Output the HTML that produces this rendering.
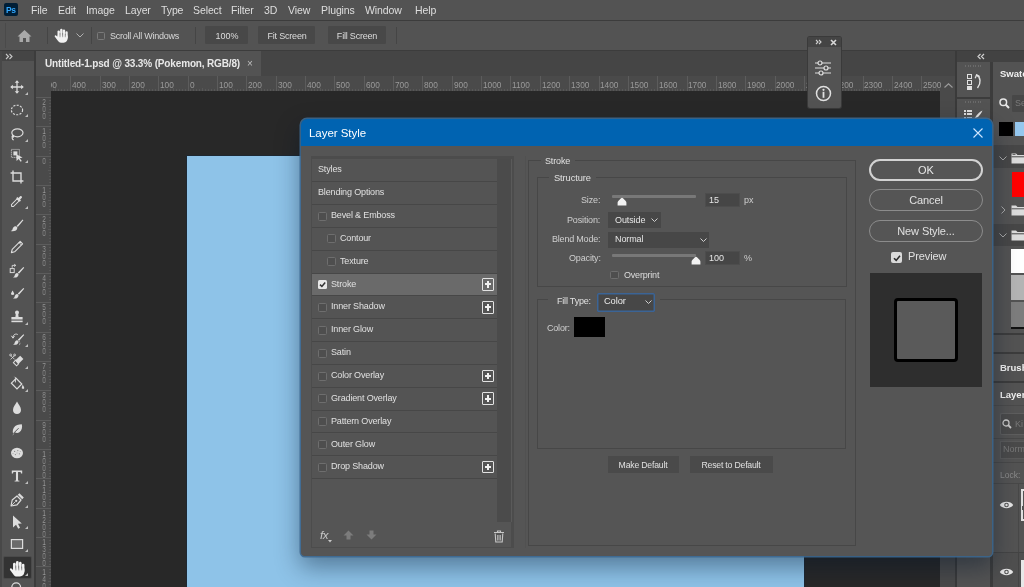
<!DOCTYPE html>
<html><head><meta charset="utf-8"><style>
html,body{margin:0;padding:0;width:1024px;height:587px;overflow:hidden;background:#535353;}
body{position:relative;font-family:"Liberation Sans", sans-serif;}
body>div{position:absolute;}
.t{white-space:nowrap;will-change:transform;}
</style></head><body>
<div style="left:0px;top:0px;width:1024px;height:587px;background:#535353;"></div>
<div style="left:0px;top:0px;width:1024px;height:20px;background:#535353;"></div>
<div style="left:0px;top:20px;width:1024px;height:1px;background:#3c3c3c;"></div>
<div style="left:4px;top:3px;width:14px;height:13px;background:#001e36;border-radius:2px;"></div>
<div class="t" style="left:5.5px;top:6.30px;font-size:8.5px;line-height:8.5px;color:#31a8ff;font-weight:bold;letter-spacing:-0.3px;">Ps</div>
<div class="t" style="left:31px;top:4.71px;font-size:10.5px;line-height:10.5px;color:#dedede;font-weight:normal;letter-spacing:-0.1px;">File</div>
<div class="t" style="left:57.6px;top:4.71px;font-size:10.5px;line-height:10.5px;color:#dedede;font-weight:normal;letter-spacing:-0.1px;">Edit</div>
<div class="t" style="left:85.6px;top:4.71px;font-size:10.5px;line-height:10.5px;color:#dedede;font-weight:normal;letter-spacing:-0.1px;">Image</div>
<div class="t" style="left:125.4px;top:4.71px;font-size:10.5px;line-height:10.5px;color:#dedede;font-weight:normal;letter-spacing:-0.1px;">Layer</div>
<div class="t" style="left:160.9px;top:4.71px;font-size:10.5px;line-height:10.5px;color:#dedede;font-weight:normal;letter-spacing:-0.1px;">Type</div>
<div class="t" style="left:193px;top:4.71px;font-size:10.5px;line-height:10.5px;color:#dedede;font-weight:normal;letter-spacing:-0.1px;">Select</div>
<div class="t" style="left:230.8px;top:4.71px;font-size:10.5px;line-height:10.5px;color:#dedede;font-weight:normal;letter-spacing:-0.1px;">Filter</div>
<div class="t" style="left:264px;top:4.71px;font-size:10.5px;line-height:10.5px;color:#dedede;font-weight:normal;letter-spacing:-0.1px;">3D</div>
<div class="t" style="left:287.7px;top:4.71px;font-size:10.5px;line-height:10.5px;color:#dedede;font-weight:normal;letter-spacing:-0.1px;">View</div>
<div class="t" style="left:321px;top:4.71px;font-size:10.5px;line-height:10.5px;color:#dedede;font-weight:normal;letter-spacing:-0.1px;">Plugins</div>
<div class="t" style="left:364.5px;top:4.71px;font-size:10.5px;line-height:10.5px;color:#dedede;font-weight:normal;letter-spacing:-0.1px;">Window</div>
<div class="t" style="left:414.6px;top:4.71px;font-size:10.5px;line-height:10.5px;color:#dedede;font-weight:normal;letter-spacing:-0.1px;">Help</div>
<div style="left:0px;top:21px;width:1024px;height:29px;background:#535353;"></div>
<div style="left:0px;top:50px;width:1024px;height:1px;background:#3c3c3c;"></div>
<div style="left:4.5px;top:23px;width:1px;height:25px;background:#4a4a4a;"></div>
<div style="left:46.5px;top:27px;width:1px;height:17px;background:#454545;"></div>
<svg style="position:absolute;left:17px;top:28.5px;" width="15" height="14" viewBox="0 0 15 14"><path d="M7.5 1 L14.5 7.5 L12.5 7.5 L12.5 13 L9 13 L9 9 L6 9 L6 13 L2.5 13 L2.5 7.5 L0.5 7.5 Z" fill="#a9a9a9"/></svg>
<svg style="position:absolute;left:53px;top:26.5px" width="17" height="17" viewBox="0 0 20 20"><g fill="#f2f2f2"><rect x="5.3" y="4" width="2.8" height="10" rx="1.4"/><rect x="8.4" y="2.2" width="2.8" height="11" rx="1.4"/><rect x="11.5" y="3" width="2.8" height="11" rx="1.4"/><rect x="14.6" y="5" width="2.7" height="9" rx="1.35"/><path d="M5.3 10 H17.3 V13 C17.3 16 15.5 18.5 12.5 18.5 H9.5 C7.5 18.5 6.5 17.5 5.5 16 L2.2 11.5 C1.5 10.5 2.6 9.3 3.6 10 L5.3 11.5 Z"/></g><g stroke="#535353" stroke-width=".6"><path d="M8.25 7 V12 M11.35 7 V12 M14.45 8 V12"/></g></svg>
<svg style="position:absolute;left:76px;top:33px;" width="8" height="5" viewBox="0 0 8 5"><path d="M0.5 0.5 L4 4 L7.5 0.5" stroke="#b0b0b0" stroke-width="1" fill="none"/></svg>
<div style="left:90.5px;top:27px;width:1px;height:17px;background:#454545;"></div>
<div style="left:97px;top:32px;width:8px;height:8px;border:1px solid #7a7a7a;border-radius:1.5px;box-sizing:border-box;"></div>
<div class="t" style="left:110px;top:31.58px;font-size:9px;line-height:9px;color:#d8d8d8;font-weight:normal;letter-spacing:-0.25px;">Scroll All Windows</div>
<div style="left:194.5px;top:27px;width:1px;height:17px;background:#454545;"></div>
<div style="left:205px;top:26px;width:43px;height:18px;background:#484848;border-radius:1px;"></div>
<div class="t" style="left:-73.5px;width:600px;text-align:center;top:31.58px;font-size:9px;line-height:9px;color:#dcdcdc;font-weight:normal;letter-spacing:0px;">100%</div>
<div style="left:258px;top:26px;width:57px;height:18px;background:#484848;border-radius:1px;"></div>
<div class="t" style="left:-13.5px;width:600px;text-align:center;top:31.58px;font-size:9px;line-height:9px;color:#dcdcdc;font-weight:normal;letter-spacing:-0.2px;">Fit Screen</div>
<div style="left:328px;top:26px;width:58px;height:18px;background:#484848;border-radius:1px;"></div>
<div class="t" style="left:57px;width:600px;text-align:center;top:31.58px;font-size:9px;line-height:9px;color:#dcdcdc;font-weight:normal;letter-spacing:-0.2px;">Fill Screen</div>
<div style="left:396px;top:27px;width:1px;height:17px;background:#454545;"></div>
<div style="left:36px;top:51px;width:920px;height:25px;background:#454545;"></div>
<div style="left:36px;top:51px;width:225px;height:25px;background:#535353;"></div>
<div class="t" style="left:45px;top:59.03px;font-size:10px;line-height:10px;color:#e8e8e8;font-weight:bold;letter-spacing:-0.15px;">Untitled-1.psd @ 33.3% (Pokemon, RGB/8)</div>
<div class="t" style="left:246.5px;top:59.03px;font-size:10px;line-height:10px;color:#bdbdbd;font-weight:normal;letter-spacing:0px;">&#215;</div>
<div style="left:36px;top:76px;width:904px;height:15px;background:#4a4a4a;"></div>
<div style="left:36px;top:91px;width:15px;height:496px;background:#4a4a4a;"></div>
<div style="left:51px;top:91px;width:889px;height:496px;background:#282828;"></div>
<div style="left:187px;top:156px;width:617px;height:431px;background:#8ec3e8;box-shadow:0 0 0 1px rgba(20,40,60,.5);"></div>
<div style="left:940px;top:76px;width:16px;height:511px;background:#4a4a4a;"></div>
<div style="left:955px;top:51px;width:2px;height:536px;background:#3a3a3a;"></div>
<div style="left:53px;top:89px;width:1px;height:2px;background:#575757;"></div>
<div style="left:55px;top:88px;width:1px;height:3px;background:#575757;"></div>
<div style="left:58px;top:89px;width:1px;height:2px;background:#575757;"></div>
<div style="left:61px;top:89px;width:1px;height:2px;background:#575757;"></div>
<div style="left:64px;top:89px;width:1px;height:2px;background:#575757;"></div>
<div style="left:67px;top:89px;width:1px;height:2px;background:#575757;"></div>
<div class="t" style="left:42.8px;top:81.0px;font-size:8.3px;line-height:8.3px;color:#9a9a9a;clip-path:inset(0 0 0 8.2px)">500</div>
<div style="left:70.0px;top:76px;width:1px;height:15px;background:#5c5c5c;"></div>
<div style="left:73px;top:89px;width:1px;height:2px;background:#575757;"></div>
<div style="left:76px;top:89px;width:1px;height:2px;background:#575757;"></div>
<div style="left:79px;top:89px;width:1px;height:2px;background:#575757;"></div>
<div style="left:82px;top:89px;width:1px;height:2px;background:#575757;"></div>
<div style="left:85px;top:88px;width:1px;height:3px;background:#575757;"></div>
<div style="left:88px;top:89px;width:1px;height:2px;background:#575757;"></div>
<div style="left:91px;top:89px;width:1px;height:2px;background:#575757;"></div>
<div style="left:94px;top:89px;width:1px;height:2px;background:#575757;"></div>
<div style="left:97px;top:89px;width:1px;height:2px;background:#575757;"></div>
<div class="t" style="left:72.1px;top:81.0px;font-size:8.3px;line-height:8.3px;color:#9a9a9a;clip-path:inset(0 0 0 0.0px)">400</div>
<div style="left:99.5px;top:76px;width:1px;height:15px;background:#5c5c5c;"></div>
<div style="left:102px;top:89px;width:1px;height:2px;background:#575757;"></div>
<div style="left:105px;top:89px;width:1px;height:2px;background:#575757;"></div>
<div style="left:108px;top:89px;width:1px;height:2px;background:#575757;"></div>
<div style="left:111px;top:89px;width:1px;height:2px;background:#575757;"></div>
<div style="left:114px;top:88px;width:1px;height:3px;background:#575757;"></div>
<div style="left:117px;top:89px;width:1px;height:2px;background:#575757;"></div>
<div style="left:120px;top:89px;width:1px;height:2px;background:#575757;"></div>
<div style="left:123px;top:89px;width:1px;height:2px;background:#575757;"></div>
<div style="left:126px;top:89px;width:1px;height:2px;background:#575757;"></div>
<div class="t" style="left:101.5px;top:81.0px;font-size:8.3px;line-height:8.3px;color:#9a9a9a;clip-path:inset(0 0 0 0.0px)">300</div>
<div style="left:129.0px;top:76px;width:1px;height:15px;background:#5c5c5c;"></div>
<div style="left:132px;top:89px;width:1px;height:2px;background:#575757;"></div>
<div style="left:135px;top:89px;width:1px;height:2px;background:#575757;"></div>
<div style="left:138px;top:89px;width:1px;height:2px;background:#575757;"></div>
<div style="left:141px;top:89px;width:1px;height:2px;background:#575757;"></div>
<div style="left:143px;top:88px;width:1px;height:3px;background:#575757;"></div>
<div style="left:146px;top:89px;width:1px;height:2px;background:#575757;"></div>
<div style="left:149px;top:89px;width:1px;height:2px;background:#575757;"></div>
<div style="left:152px;top:89px;width:1px;height:2px;background:#575757;"></div>
<div style="left:155px;top:89px;width:1px;height:2px;background:#575757;"></div>
<div class="t" style="left:130.8px;top:81.0px;font-size:8.3px;line-height:8.3px;color:#9a9a9a;clip-path:inset(0 0 0 0.0px)">200</div>
<div style="left:158.0px;top:76px;width:1px;height:15px;background:#5c5c5c;"></div>
<div style="left:161px;top:89px;width:1px;height:2px;background:#575757;"></div>
<div style="left:164px;top:89px;width:1px;height:2px;background:#575757;"></div>
<div style="left:167px;top:89px;width:1px;height:2px;background:#575757;"></div>
<div style="left:170px;top:89px;width:1px;height:2px;background:#575757;"></div>
<div style="left:173px;top:88px;width:1px;height:3px;background:#575757;"></div>
<div style="left:176px;top:89px;width:1px;height:2px;background:#575757;"></div>
<div style="left:179px;top:89px;width:1px;height:2px;background:#575757;"></div>
<div style="left:182px;top:89px;width:1px;height:2px;background:#575757;"></div>
<div style="left:185px;top:89px;width:1px;height:2px;background:#575757;"></div>
<div class="t" style="left:160.2px;top:81.0px;font-size:8.3px;line-height:8.3px;color:#9a9a9a;clip-path:inset(0 0 0 0.0px)">100</div>
<div style="left:187.5px;top:76px;width:1px;height:15px;background:#5c5c5c;"></div>
<div style="left:190px;top:89px;width:1px;height:2px;background:#575757;"></div>
<div style="left:193px;top:89px;width:1px;height:2px;background:#575757;"></div>
<div style="left:196px;top:89px;width:1px;height:2px;background:#575757;"></div>
<div style="left:199px;top:89px;width:1px;height:2px;background:#575757;"></div>
<div style="left:202px;top:88px;width:1px;height:3px;background:#575757;"></div>
<div style="left:205px;top:89px;width:1px;height:2px;background:#575757;"></div>
<div style="left:208px;top:89px;width:1px;height:2px;background:#575757;"></div>
<div style="left:211px;top:89px;width:1px;height:2px;background:#575757;"></div>
<div style="left:214px;top:89px;width:1px;height:2px;background:#575757;"></div>
<div class="t" style="left:189.5px;top:81.0px;font-size:8.3px;line-height:8.3px;color:#9a9a9a;clip-path:inset(0 0 0 0.0px)">0</div>
<div style="left:217.0px;top:76px;width:1px;height:15px;background:#5c5c5c;"></div>
<div style="left:220px;top:89px;width:1px;height:2px;background:#575757;"></div>
<div style="left:223px;top:89px;width:1px;height:2px;background:#575757;"></div>
<div style="left:226px;top:89px;width:1px;height:2px;background:#575757;"></div>
<div style="left:229px;top:89px;width:1px;height:2px;background:#575757;"></div>
<div style="left:232px;top:88px;width:1px;height:3px;background:#575757;"></div>
<div style="left:234px;top:89px;width:1px;height:2px;background:#575757;"></div>
<div style="left:237px;top:89px;width:1px;height:2px;background:#575757;"></div>
<div style="left:240px;top:89px;width:1px;height:2px;background:#575757;"></div>
<div style="left:243px;top:89px;width:1px;height:2px;background:#575757;"></div>
<div class="t" style="left:218.8px;top:81.0px;font-size:8.3px;line-height:8.3px;color:#9a9a9a;clip-path:inset(0 0 0 0.0px)">100</div>
<div style="left:246.0px;top:76px;width:1px;height:15px;background:#5c5c5c;"></div>
<div style="left:249px;top:89px;width:1px;height:2px;background:#575757;"></div>
<div style="left:252px;top:89px;width:1px;height:2px;background:#575757;"></div>
<div style="left:255px;top:89px;width:1px;height:2px;background:#575757;"></div>
<div style="left:258px;top:89px;width:1px;height:2px;background:#575757;"></div>
<div style="left:261px;top:88px;width:1px;height:3px;background:#575757;"></div>
<div style="left:264px;top:89px;width:1px;height:2px;background:#575757;"></div>
<div style="left:267px;top:89px;width:1px;height:2px;background:#575757;"></div>
<div style="left:270px;top:89px;width:1px;height:2px;background:#575757;"></div>
<div style="left:273px;top:89px;width:1px;height:2px;background:#575757;"></div>
<div class="t" style="left:248.2px;top:81.0px;font-size:8.3px;line-height:8.3px;color:#9a9a9a;clip-path:inset(0 0 0 0.0px)">200</div>
<div style="left:275.5px;top:76px;width:1px;height:15px;background:#5c5c5c;"></div>
<div style="left:278px;top:89px;width:1px;height:2px;background:#575757;"></div>
<div style="left:281px;top:89px;width:1px;height:2px;background:#575757;"></div>
<div style="left:284px;top:89px;width:1px;height:2px;background:#575757;"></div>
<div style="left:287px;top:89px;width:1px;height:2px;background:#575757;"></div>
<div style="left:290px;top:88px;width:1px;height:3px;background:#575757;"></div>
<div style="left:293px;top:89px;width:1px;height:2px;background:#575757;"></div>
<div style="left:296px;top:89px;width:1px;height:2px;background:#575757;"></div>
<div style="left:299px;top:89px;width:1px;height:2px;background:#575757;"></div>
<div style="left:302px;top:89px;width:1px;height:2px;background:#575757;"></div>
<div class="t" style="left:277.5px;top:81.0px;font-size:8.3px;line-height:8.3px;color:#9a9a9a;clip-path:inset(0 0 0 0.0px)">300</div>
<div style="left:305.0px;top:76px;width:1px;height:15px;background:#5c5c5c;"></div>
<div style="left:308px;top:89px;width:1px;height:2px;background:#575757;"></div>
<div style="left:311px;top:89px;width:1px;height:2px;background:#575757;"></div>
<div style="left:314px;top:89px;width:1px;height:2px;background:#575757;"></div>
<div style="left:317px;top:89px;width:1px;height:2px;background:#575757;"></div>
<div style="left:320px;top:88px;width:1px;height:3px;background:#575757;"></div>
<div style="left:322px;top:89px;width:1px;height:2px;background:#575757;"></div>
<div style="left:325px;top:89px;width:1px;height:2px;background:#575757;"></div>
<div style="left:328px;top:89px;width:1px;height:2px;background:#575757;"></div>
<div style="left:331px;top:89px;width:1px;height:2px;background:#575757;"></div>
<div class="t" style="left:306.9px;top:81.0px;font-size:8.3px;line-height:8.3px;color:#9a9a9a;clip-path:inset(0 0 0 0.0px)">400</div>
<div style="left:334.0px;top:76px;width:1px;height:15px;background:#5c5c5c;"></div>
<div style="left:337px;top:89px;width:1px;height:2px;background:#575757;"></div>
<div style="left:340px;top:89px;width:1px;height:2px;background:#575757;"></div>
<div style="left:343px;top:89px;width:1px;height:2px;background:#575757;"></div>
<div style="left:346px;top:89px;width:1px;height:2px;background:#575757;"></div>
<div style="left:349px;top:88px;width:1px;height:3px;background:#575757;"></div>
<div style="left:352px;top:89px;width:1px;height:2px;background:#575757;"></div>
<div style="left:355px;top:89px;width:1px;height:2px;background:#575757;"></div>
<div style="left:358px;top:89px;width:1px;height:2px;background:#575757;"></div>
<div style="left:361px;top:89px;width:1px;height:2px;background:#575757;"></div>
<div class="t" style="left:336.2px;top:81.0px;font-size:8.3px;line-height:8.3px;color:#9a9a9a;clip-path:inset(0 0 0 0.0px)">500</div>
<div style="left:363.5px;top:76px;width:1px;height:15px;background:#5c5c5c;"></div>
<div style="left:366px;top:89px;width:1px;height:2px;background:#575757;"></div>
<div style="left:369px;top:89px;width:1px;height:2px;background:#575757;"></div>
<div style="left:372px;top:89px;width:1px;height:2px;background:#575757;"></div>
<div style="left:375px;top:89px;width:1px;height:2px;background:#575757;"></div>
<div style="left:378px;top:88px;width:1px;height:3px;background:#575757;"></div>
<div style="left:381px;top:89px;width:1px;height:2px;background:#575757;"></div>
<div style="left:384px;top:89px;width:1px;height:2px;background:#575757;"></div>
<div style="left:387px;top:89px;width:1px;height:2px;background:#575757;"></div>
<div style="left:390px;top:89px;width:1px;height:2px;background:#575757;"></div>
<div class="t" style="left:365.5px;top:81.0px;font-size:8.3px;line-height:8.3px;color:#9a9a9a;clip-path:inset(0 0 0 0.0px)">600</div>
<div style="left:393.0px;top:76px;width:1px;height:15px;background:#5c5c5c;"></div>
<div style="left:396px;top:89px;width:1px;height:2px;background:#575757;"></div>
<div style="left:399px;top:89px;width:1px;height:2px;background:#575757;"></div>
<div style="left:402px;top:89px;width:1px;height:2px;background:#575757;"></div>
<div style="left:405px;top:89px;width:1px;height:2px;background:#575757;"></div>
<div style="left:408px;top:88px;width:1px;height:3px;background:#575757;"></div>
<div style="left:410px;top:89px;width:1px;height:2px;background:#575757;"></div>
<div style="left:413px;top:89px;width:1px;height:2px;background:#575757;"></div>
<div style="left:416px;top:89px;width:1px;height:2px;background:#575757;"></div>
<div style="left:419px;top:89px;width:1px;height:2px;background:#575757;"></div>
<div class="t" style="left:394.9px;top:81.0px;font-size:8.3px;line-height:8.3px;color:#9a9a9a;clip-path:inset(0 0 0 0.0px)">700</div>
<div style="left:422.0px;top:76px;width:1px;height:15px;background:#5c5c5c;"></div>
<div style="left:425px;top:89px;width:1px;height:2px;background:#575757;"></div>
<div style="left:428px;top:89px;width:1px;height:2px;background:#575757;"></div>
<div style="left:431px;top:89px;width:1px;height:2px;background:#575757;"></div>
<div style="left:434px;top:89px;width:1px;height:2px;background:#575757;"></div>
<div style="left:437px;top:88px;width:1px;height:3px;background:#575757;"></div>
<div style="left:440px;top:89px;width:1px;height:2px;background:#575757;"></div>
<div style="left:443px;top:89px;width:1px;height:2px;background:#575757;"></div>
<div style="left:446px;top:89px;width:1px;height:2px;background:#575757;"></div>
<div style="left:449px;top:89px;width:1px;height:2px;background:#575757;"></div>
<div class="t" style="left:424.2px;top:81.0px;font-size:8.3px;line-height:8.3px;color:#9a9a9a;clip-path:inset(0 0 0 0.0px)">800</div>
<div style="left:451.5px;top:76px;width:1px;height:15px;background:#5c5c5c;"></div>
<div style="left:454px;top:89px;width:1px;height:2px;background:#575757;"></div>
<div style="left:457px;top:89px;width:1px;height:2px;background:#575757;"></div>
<div style="left:460px;top:89px;width:1px;height:2px;background:#575757;"></div>
<div style="left:463px;top:89px;width:1px;height:2px;background:#575757;"></div>
<div style="left:466px;top:88px;width:1px;height:3px;background:#575757;"></div>
<div style="left:469px;top:89px;width:1px;height:2px;background:#575757;"></div>
<div style="left:472px;top:89px;width:1px;height:2px;background:#575757;"></div>
<div style="left:475px;top:89px;width:1px;height:2px;background:#575757;"></div>
<div style="left:478px;top:89px;width:1px;height:2px;background:#575757;"></div>
<div class="t" style="left:453.6px;top:81.0px;font-size:8.3px;line-height:8.3px;color:#9a9a9a;clip-path:inset(0 0 0 0.0px)">900</div>
<div style="left:481.0px;top:76px;width:1px;height:15px;background:#5c5c5c;"></div>
<div style="left:484px;top:89px;width:1px;height:2px;background:#575757;"></div>
<div style="left:487px;top:89px;width:1px;height:2px;background:#575757;"></div>
<div style="left:490px;top:89px;width:1px;height:2px;background:#575757;"></div>
<div style="left:493px;top:89px;width:1px;height:2px;background:#575757;"></div>
<div style="left:496px;top:88px;width:1px;height:3px;background:#575757;"></div>
<div style="left:499px;top:89px;width:1px;height:2px;background:#575757;"></div>
<div style="left:501px;top:89px;width:1px;height:2px;background:#575757;"></div>
<div style="left:504px;top:89px;width:1px;height:2px;background:#575757;"></div>
<div style="left:507px;top:89px;width:1px;height:2px;background:#575757;"></div>
<div class="t" style="left:482.9px;top:81.0px;font-size:8.3px;line-height:8.3px;color:#9a9a9a;clip-path:inset(0 0 0 0.0px)">1000</div>
<div style="left:510.0px;top:76px;width:1px;height:15px;background:#5c5c5c;"></div>
<div style="left:513px;top:89px;width:1px;height:2px;background:#575757;"></div>
<div style="left:516px;top:89px;width:1px;height:2px;background:#575757;"></div>
<div style="left:519px;top:89px;width:1px;height:2px;background:#575757;"></div>
<div style="left:522px;top:89px;width:1px;height:2px;background:#575757;"></div>
<div style="left:525px;top:88px;width:1px;height:3px;background:#575757;"></div>
<div style="left:528px;top:89px;width:1px;height:2px;background:#575757;"></div>
<div style="left:531px;top:89px;width:1px;height:2px;background:#575757;"></div>
<div style="left:534px;top:89px;width:1px;height:2px;background:#575757;"></div>
<div style="left:537px;top:89px;width:1px;height:2px;background:#575757;"></div>
<div class="t" style="left:512.2px;top:81.0px;font-size:8.3px;line-height:8.3px;color:#9a9a9a;clip-path:inset(0 0 0 0.0px)">1100</div>
<div style="left:539.5px;top:76px;width:1px;height:15px;background:#5c5c5c;"></div>
<div style="left:543px;top:89px;width:1px;height:2px;background:#575757;"></div>
<div style="left:545px;top:89px;width:1px;height:2px;background:#575757;"></div>
<div style="left:548px;top:89px;width:1px;height:2px;background:#575757;"></div>
<div style="left:551px;top:89px;width:1px;height:2px;background:#575757;"></div>
<div style="left:554px;top:88px;width:1px;height:3px;background:#575757;"></div>
<div style="left:557px;top:89px;width:1px;height:2px;background:#575757;"></div>
<div style="left:560px;top:89px;width:1px;height:2px;background:#575757;"></div>
<div style="left:563px;top:89px;width:1px;height:2px;background:#575757;"></div>
<div style="left:566px;top:89px;width:1px;height:2px;background:#575757;"></div>
<div class="t" style="left:541.6px;top:81.0px;font-size:8.3px;line-height:8.3px;color:#9a9a9a;clip-path:inset(0 0 0 0.0px)">1200</div>
<div style="left:569.0px;top:76px;width:1px;height:15px;background:#5c5c5c;"></div>
<div style="left:572px;top:89px;width:1px;height:2px;background:#575757;"></div>
<div style="left:575px;top:89px;width:1px;height:2px;background:#575757;"></div>
<div style="left:578px;top:89px;width:1px;height:2px;background:#575757;"></div>
<div style="left:581px;top:89px;width:1px;height:2px;background:#575757;"></div>
<div style="left:584px;top:88px;width:1px;height:3px;background:#575757;"></div>
<div style="left:587px;top:89px;width:1px;height:2px;background:#575757;"></div>
<div style="left:589px;top:89px;width:1px;height:2px;background:#575757;"></div>
<div style="left:592px;top:89px;width:1px;height:2px;background:#575757;"></div>
<div style="left:595px;top:89px;width:1px;height:2px;background:#575757;"></div>
<div class="t" style="left:570.9px;top:81.0px;font-size:8.3px;line-height:8.3px;color:#9a9a9a;clip-path:inset(0 0 0 0.0px)">1300</div>
<div style="left:598.5px;top:76px;width:1px;height:15px;background:#5c5c5c;"></div>
<div style="left:601px;top:89px;width:1px;height:2px;background:#575757;"></div>
<div style="left:604px;top:89px;width:1px;height:2px;background:#575757;"></div>
<div style="left:607px;top:89px;width:1px;height:2px;background:#575757;"></div>
<div style="left:610px;top:89px;width:1px;height:2px;background:#575757;"></div>
<div style="left:613px;top:88px;width:1px;height:3px;background:#575757;"></div>
<div style="left:616px;top:89px;width:1px;height:2px;background:#575757;"></div>
<div style="left:619px;top:89px;width:1px;height:2px;background:#575757;"></div>
<div style="left:622px;top:89px;width:1px;height:2px;background:#575757;"></div>
<div style="left:625px;top:89px;width:1px;height:2px;background:#575757;"></div>
<div class="t" style="left:600.3px;top:81.0px;font-size:8.3px;line-height:8.3px;color:#9a9a9a;clip-path:inset(0 0 0 0.0px)">1400</div>
<div style="left:627.5px;top:76px;width:1px;height:15px;background:#5c5c5c;"></div>
<div style="left:631px;top:89px;width:1px;height:2px;background:#575757;"></div>
<div style="left:633px;top:89px;width:1px;height:2px;background:#575757;"></div>
<div style="left:636px;top:89px;width:1px;height:2px;background:#575757;"></div>
<div style="left:639px;top:89px;width:1px;height:2px;background:#575757;"></div>
<div style="left:642px;top:88px;width:1px;height:3px;background:#575757;"></div>
<div style="left:645px;top:89px;width:1px;height:2px;background:#575757;"></div>
<div style="left:648px;top:89px;width:1px;height:2px;background:#575757;"></div>
<div style="left:651px;top:89px;width:1px;height:2px;background:#575757;"></div>
<div style="left:654px;top:89px;width:1px;height:2px;background:#575757;"></div>
<div class="t" style="left:629.6px;top:81.0px;font-size:8.3px;line-height:8.3px;color:#9a9a9a;clip-path:inset(0 0 0 0.0px)">1500</div>
<div style="left:657.0px;top:76px;width:1px;height:15px;background:#5c5c5c;"></div>
<div style="left:660px;top:89px;width:1px;height:2px;background:#575757;"></div>
<div style="left:663px;top:89px;width:1px;height:2px;background:#575757;"></div>
<div style="left:666px;top:89px;width:1px;height:2px;background:#575757;"></div>
<div style="left:669px;top:89px;width:1px;height:2px;background:#575757;"></div>
<div style="left:672px;top:88px;width:1px;height:3px;background:#575757;"></div>
<div style="left:675px;top:89px;width:1px;height:2px;background:#575757;"></div>
<div style="left:677px;top:89px;width:1px;height:2px;background:#575757;"></div>
<div style="left:680px;top:89px;width:1px;height:2px;background:#575757;"></div>
<div style="left:683px;top:89px;width:1px;height:2px;background:#575757;"></div>
<div class="t" style="left:658.9px;top:81.0px;font-size:8.3px;line-height:8.3px;color:#9a9a9a;clip-path:inset(0 0 0 0.0px)">1600</div>
<div style="left:686.5px;top:76px;width:1px;height:15px;background:#5c5c5c;"></div>
<div style="left:689px;top:89px;width:1px;height:2px;background:#575757;"></div>
<div style="left:692px;top:89px;width:1px;height:2px;background:#575757;"></div>
<div style="left:695px;top:89px;width:1px;height:2px;background:#575757;"></div>
<div style="left:698px;top:89px;width:1px;height:2px;background:#575757;"></div>
<div style="left:701px;top:88px;width:1px;height:3px;background:#575757;"></div>
<div style="left:704px;top:89px;width:1px;height:2px;background:#575757;"></div>
<div style="left:707px;top:89px;width:1px;height:2px;background:#575757;"></div>
<div style="left:710px;top:89px;width:1px;height:2px;background:#575757;"></div>
<div style="left:713px;top:89px;width:1px;height:2px;background:#575757;"></div>
<div class="t" style="left:688.3px;top:81.0px;font-size:8.3px;line-height:8.3px;color:#9a9a9a;clip-path:inset(0 0 0 0.0px)">1700</div>
<div style="left:715.5px;top:76px;width:1px;height:15px;background:#5c5c5c;"></div>
<div style="left:719px;top:89px;width:1px;height:2px;background:#575757;"></div>
<div style="left:721px;top:89px;width:1px;height:2px;background:#575757;"></div>
<div style="left:724px;top:89px;width:1px;height:2px;background:#575757;"></div>
<div style="left:727px;top:89px;width:1px;height:2px;background:#575757;"></div>
<div style="left:730px;top:88px;width:1px;height:3px;background:#575757;"></div>
<div style="left:733px;top:89px;width:1px;height:2px;background:#575757;"></div>
<div style="left:736px;top:89px;width:1px;height:2px;background:#575757;"></div>
<div style="left:739px;top:89px;width:1px;height:2px;background:#575757;"></div>
<div style="left:742px;top:89px;width:1px;height:2px;background:#575757;"></div>
<div class="t" style="left:717.6px;top:81.0px;font-size:8.3px;line-height:8.3px;color:#9a9a9a;clip-path:inset(0 0 0 0.0px)">1800</div>
<div style="left:745.0px;top:76px;width:1px;height:15px;background:#5c5c5c;"></div>
<div style="left:748px;top:89px;width:1px;height:2px;background:#575757;"></div>
<div style="left:751px;top:89px;width:1px;height:2px;background:#575757;"></div>
<div style="left:754px;top:89px;width:1px;height:2px;background:#575757;"></div>
<div style="left:757px;top:89px;width:1px;height:2px;background:#575757;"></div>
<div style="left:760px;top:88px;width:1px;height:3px;background:#575757;"></div>
<div style="left:763px;top:89px;width:1px;height:2px;background:#575757;"></div>
<div style="left:765px;top:89px;width:1px;height:2px;background:#575757;"></div>
<div style="left:768px;top:89px;width:1px;height:2px;background:#575757;"></div>
<div style="left:771px;top:89px;width:1px;height:2px;background:#575757;"></div>
<div class="t" style="left:747.0px;top:81.0px;font-size:8.3px;line-height:8.3px;color:#9a9a9a;clip-path:inset(0 0 0 0.0px)">1900</div>
<div style="left:774.5px;top:76px;width:1px;height:15px;background:#5c5c5c;"></div>
<div style="left:777px;top:89px;width:1px;height:2px;background:#575757;"></div>
<div style="left:780px;top:89px;width:1px;height:2px;background:#575757;"></div>
<div style="left:783px;top:89px;width:1px;height:2px;background:#575757;"></div>
<div style="left:786px;top:89px;width:1px;height:2px;background:#575757;"></div>
<div style="left:789px;top:88px;width:1px;height:3px;background:#575757;"></div>
<div style="left:792px;top:89px;width:1px;height:2px;background:#575757;"></div>
<div style="left:795px;top:89px;width:1px;height:2px;background:#575757;"></div>
<div style="left:798px;top:89px;width:1px;height:2px;background:#575757;"></div>
<div style="left:801px;top:89px;width:1px;height:2px;background:#575757;"></div>
<div class="t" style="left:776.3px;top:81.0px;font-size:8.3px;line-height:8.3px;color:#9a9a9a;clip-path:inset(0 0 0 0.0px)">2000</div>
<div style="left:803.5px;top:76px;width:1px;height:15px;background:#5c5c5c;"></div>
<div style="left:807px;top:89px;width:1px;height:2px;background:#575757;"></div>
<div style="left:810px;top:89px;width:1px;height:2px;background:#575757;"></div>
<div style="left:812px;top:89px;width:1px;height:2px;background:#575757;"></div>
<div style="left:815px;top:89px;width:1px;height:2px;background:#575757;"></div>
<div style="left:818px;top:88px;width:1px;height:3px;background:#575757;"></div>
<div style="left:821px;top:89px;width:1px;height:2px;background:#575757;"></div>
<div style="left:824px;top:89px;width:1px;height:2px;background:#575757;"></div>
<div style="left:827px;top:89px;width:1px;height:2px;background:#575757;"></div>
<div style="left:830px;top:89px;width:1px;height:2px;background:#575757;"></div>
<div class="t" style="left:805.6px;top:81.0px;font-size:8.3px;line-height:8.3px;color:#9a9a9a;clip-path:inset(0 0 0 0.0px)">2100</div>
<div style="left:833.0px;top:76px;width:1px;height:15px;background:#5c5c5c;"></div>
<div style="left:836px;top:89px;width:1px;height:2px;background:#575757;"></div>
<div style="left:839px;top:89px;width:1px;height:2px;background:#575757;"></div>
<div style="left:842px;top:89px;width:1px;height:2px;background:#575757;"></div>
<div style="left:845px;top:89px;width:1px;height:2px;background:#575757;"></div>
<div style="left:848px;top:88px;width:1px;height:3px;background:#575757;"></div>
<div style="left:851px;top:89px;width:1px;height:2px;background:#575757;"></div>
<div style="left:854px;top:89px;width:1px;height:2px;background:#575757;"></div>
<div style="left:856px;top:89px;width:1px;height:2px;background:#575757;"></div>
<div style="left:859px;top:89px;width:1px;height:2px;background:#575757;"></div>
<div class="t" style="left:835.0px;top:81.0px;font-size:8.3px;line-height:8.3px;color:#9a9a9a;clip-path:inset(0 0 0 0.0px)">2200</div>
<div style="left:862.5px;top:76px;width:1px;height:15px;background:#5c5c5c;"></div>
<div style="left:865px;top:89px;width:1px;height:2px;background:#575757;"></div>
<div style="left:868px;top:89px;width:1px;height:2px;background:#575757;"></div>
<div style="left:871px;top:89px;width:1px;height:2px;background:#575757;"></div>
<div style="left:874px;top:89px;width:1px;height:2px;background:#575757;"></div>
<div style="left:877px;top:88px;width:1px;height:3px;background:#575757;"></div>
<div style="left:880px;top:89px;width:1px;height:2px;background:#575757;"></div>
<div style="left:883px;top:89px;width:1px;height:2px;background:#575757;"></div>
<div style="left:886px;top:89px;width:1px;height:2px;background:#575757;"></div>
<div style="left:889px;top:89px;width:1px;height:2px;background:#575757;"></div>
<div class="t" style="left:864.3px;top:81.0px;font-size:8.3px;line-height:8.3px;color:#9a9a9a;clip-path:inset(0 0 0 0.0px)">2300</div>
<div style="left:891.5px;top:76px;width:1px;height:15px;background:#5c5c5c;"></div>
<div style="left:895px;top:89px;width:1px;height:2px;background:#575757;"></div>
<div style="left:898px;top:89px;width:1px;height:2px;background:#575757;"></div>
<div style="left:900px;top:89px;width:1px;height:2px;background:#575757;"></div>
<div style="left:903px;top:89px;width:1px;height:2px;background:#575757;"></div>
<div style="left:906px;top:88px;width:1px;height:3px;background:#575757;"></div>
<div style="left:909px;top:89px;width:1px;height:2px;background:#575757;"></div>
<div style="left:912px;top:89px;width:1px;height:2px;background:#575757;"></div>
<div style="left:915px;top:89px;width:1px;height:2px;background:#575757;"></div>
<div style="left:918px;top:89px;width:1px;height:2px;background:#575757;"></div>
<div class="t" style="left:893.7px;top:81.0px;font-size:8.3px;line-height:8.3px;color:#9a9a9a;clip-path:inset(0 0 0 0.0px)">2400</div>
<div style="left:921.0px;top:76px;width:1px;height:15px;background:#5c5c5c;"></div>
<div style="left:924px;top:89px;width:1px;height:2px;background:#575757;"></div>
<div style="left:927px;top:89px;width:1px;height:2px;background:#575757;"></div>
<div style="left:930px;top:89px;width:1px;height:2px;background:#575757;"></div>
<div style="left:933px;top:89px;width:1px;height:2px;background:#575757;"></div>
<div style="left:936px;top:88px;width:1px;height:3px;background:#575757;"></div>
<div style="left:939px;top:89px;width:1px;height:2px;background:#575757;"></div>
<div class="t" style="left:923.0px;top:81.0px;font-size:8.3px;line-height:8.3px;color:#9a9a9a;clip-path:inset(0 0 0 0.0px)">2500</div>
<div style="left:36px;top:76px;width:15px;height:15px;background:#4a4a4a;"></div>
<div style="left:36px;top:97px;width:15px;height:1px;background:#5c5c5c;"></div>
<div style="left:49px;top:100px;width:2px;height:1px;background:#575757;"></div>
<div style="left:49px;top:103px;width:2px;height:1px;background:#575757;"></div>
<div style="left:49px;top:106px;width:2px;height:1px;background:#575757;"></div>
<div style="left:49px;top:109px;width:2px;height:1px;background:#575757;"></div>
<div style="left:48px;top:112px;width:3px;height:1px;background:#575757;"></div>
<div style="left:49px;top:115px;width:2px;height:1px;background:#575757;"></div>
<div style="left:49px;top:118px;width:2px;height:1px;background:#575757;"></div>
<div style="left:49px;top:120px;width:2px;height:1px;background:#575757;"></div>
<div style="left:49px;top:123px;width:2px;height:1px;background:#575757;"></div>
<div class="t" style="left:40px;top:99.0px;width:8px;font-size:8.5px;line-height:6.9px;color:#999999;text-align:center;white-space:normal;word-break:break-all;transform:scaleX(.72)">200</div>
<div style="left:36px;top:126px;width:15px;height:1px;background:#5c5c5c;"></div>
<div style="left:49px;top:129px;width:2px;height:1px;background:#575757;"></div>
<div style="left:49px;top:132px;width:2px;height:1px;background:#575757;"></div>
<div style="left:49px;top:135px;width:2px;height:1px;background:#575757;"></div>
<div style="left:49px;top:138px;width:2px;height:1px;background:#575757;"></div>
<div style="left:48px;top:141px;width:3px;height:1px;background:#575757;"></div>
<div style="left:49px;top:144px;width:2px;height:1px;background:#575757;"></div>
<div style="left:49px;top:147px;width:2px;height:1px;background:#575757;"></div>
<div style="left:49px;top:150px;width:2px;height:1px;background:#575757;"></div>
<div style="left:49px;top:153px;width:2px;height:1px;background:#575757;"></div>
<div class="t" style="left:40px;top:128.4px;width:8px;font-size:8.5px;line-height:6.9px;color:#999999;text-align:center;white-space:normal;word-break:break-all;transform:scaleX(.72)">100</div>
<div style="left:36px;top:156px;width:15px;height:1px;background:#5c5c5c;"></div>
<div style="left:49px;top:159px;width:2px;height:1px;background:#575757;"></div>
<div style="left:49px;top:162px;width:2px;height:1px;background:#575757;"></div>
<div style="left:49px;top:165px;width:2px;height:1px;background:#575757;"></div>
<div style="left:49px;top:167px;width:2px;height:1px;background:#575757;"></div>
<div style="left:48px;top:170px;width:3px;height:1px;background:#575757;"></div>
<div style="left:49px;top:173px;width:2px;height:1px;background:#575757;"></div>
<div style="left:49px;top:176px;width:2px;height:1px;background:#575757;"></div>
<div style="left:49px;top:179px;width:2px;height:1px;background:#575757;"></div>
<div style="left:49px;top:182px;width:2px;height:1px;background:#575757;"></div>
<div class="t" style="left:40px;top:157.7px;width:8px;font-size:8.5px;line-height:6.9px;color:#999999;text-align:center;white-space:normal;word-break:break-all;transform:scaleX(.72)">0</div>
<div style="left:36px;top:185px;width:15px;height:1px;background:#5c5c5c;"></div>
<div style="left:49px;top:188px;width:2px;height:1px;background:#575757;"></div>
<div style="left:49px;top:191px;width:2px;height:1px;background:#575757;"></div>
<div style="left:49px;top:194px;width:2px;height:1px;background:#575757;"></div>
<div style="left:49px;top:197px;width:2px;height:1px;background:#575757;"></div>
<div style="left:48px;top:200px;width:3px;height:1px;background:#575757;"></div>
<div style="left:49px;top:203px;width:2px;height:1px;background:#575757;"></div>
<div style="left:49px;top:206px;width:2px;height:1px;background:#575757;"></div>
<div style="left:49px;top:209px;width:2px;height:1px;background:#575757;"></div>
<div style="left:49px;top:211px;width:2px;height:1px;background:#575757;"></div>
<div class="t" style="left:40px;top:187.0px;width:8px;font-size:8.5px;line-height:6.9px;color:#999999;text-align:center;white-space:normal;word-break:break-all;transform:scaleX(.72)">100</div>
<div style="left:36px;top:214px;width:15px;height:1px;background:#5c5c5c;"></div>
<div style="left:49px;top:217px;width:2px;height:1px;background:#575757;"></div>
<div style="left:49px;top:220px;width:2px;height:1px;background:#575757;"></div>
<div style="left:49px;top:223px;width:2px;height:1px;background:#575757;"></div>
<div style="left:49px;top:226px;width:2px;height:1px;background:#575757;"></div>
<div style="left:48px;top:229px;width:3px;height:1px;background:#575757;"></div>
<div style="left:49px;top:232px;width:2px;height:1px;background:#575757;"></div>
<div style="left:49px;top:235px;width:2px;height:1px;background:#575757;"></div>
<div style="left:49px;top:238px;width:2px;height:1px;background:#575757;"></div>
<div style="left:49px;top:241px;width:2px;height:1px;background:#575757;"></div>
<div class="t" style="left:40px;top:216.4px;width:8px;font-size:8.5px;line-height:6.9px;color:#999999;text-align:center;white-space:normal;word-break:break-all;transform:scaleX(.72)">200</div>
<div style="left:36px;top:244px;width:15px;height:1px;background:#5c5c5c;"></div>
<div style="left:49px;top:247px;width:2px;height:1px;background:#575757;"></div>
<div style="left:49px;top:250px;width:2px;height:1px;background:#575757;"></div>
<div style="left:49px;top:253px;width:2px;height:1px;background:#575757;"></div>
<div style="left:49px;top:255px;width:2px;height:1px;background:#575757;"></div>
<div style="left:48px;top:258px;width:3px;height:1px;background:#575757;"></div>
<div style="left:49px;top:261px;width:2px;height:1px;background:#575757;"></div>
<div style="left:49px;top:264px;width:2px;height:1px;background:#575757;"></div>
<div style="left:49px;top:267px;width:2px;height:1px;background:#575757;"></div>
<div style="left:49px;top:270px;width:2px;height:1px;background:#575757;"></div>
<div class="t" style="left:40px;top:245.7px;width:8px;font-size:8.5px;line-height:6.9px;color:#999999;text-align:center;white-space:normal;word-break:break-all;transform:scaleX(.72)">300</div>
<div style="left:36px;top:273px;width:15px;height:1px;background:#5c5c5c;"></div>
<div style="left:49px;top:276px;width:2px;height:1px;background:#575757;"></div>
<div style="left:49px;top:279px;width:2px;height:1px;background:#575757;"></div>
<div style="left:49px;top:282px;width:2px;height:1px;background:#575757;"></div>
<div style="left:49px;top:285px;width:2px;height:1px;background:#575757;"></div>
<div style="left:48px;top:288px;width:3px;height:1px;background:#575757;"></div>
<div style="left:49px;top:291px;width:2px;height:1px;background:#575757;"></div>
<div style="left:49px;top:294px;width:2px;height:1px;background:#575757;"></div>
<div style="left:49px;top:297px;width:2px;height:1px;background:#575757;"></div>
<div style="left:49px;top:299px;width:2px;height:1px;background:#575757;"></div>
<div class="t" style="left:40px;top:275.1px;width:8px;font-size:8.5px;line-height:6.9px;color:#999999;text-align:center;white-space:normal;word-break:break-all;transform:scaleX(.72)">400</div>
<div style="left:36px;top:302px;width:15px;height:1px;background:#5c5c5c;"></div>
<div style="left:49px;top:305px;width:2px;height:1px;background:#575757;"></div>
<div style="left:49px;top:308px;width:2px;height:1px;background:#575757;"></div>
<div style="left:49px;top:311px;width:2px;height:1px;background:#575757;"></div>
<div style="left:49px;top:314px;width:2px;height:1px;background:#575757;"></div>
<div style="left:48px;top:317px;width:3px;height:1px;background:#575757;"></div>
<div style="left:49px;top:320px;width:2px;height:1px;background:#575757;"></div>
<div style="left:49px;top:323px;width:2px;height:1px;background:#575757;"></div>
<div style="left:49px;top:326px;width:2px;height:1px;background:#575757;"></div>
<div style="left:49px;top:329px;width:2px;height:1px;background:#575757;"></div>
<div class="t" style="left:40px;top:304.4px;width:8px;font-size:8.5px;line-height:6.9px;color:#999999;text-align:center;white-space:normal;word-break:break-all;transform:scaleX(.72)">500</div>
<div style="left:36px;top:332px;width:15px;height:1px;background:#5c5c5c;"></div>
<div style="left:49px;top:335px;width:2px;height:1px;background:#575757;"></div>
<div style="left:49px;top:338px;width:2px;height:1px;background:#575757;"></div>
<div style="left:49px;top:341px;width:2px;height:1px;background:#575757;"></div>
<div style="left:49px;top:343px;width:2px;height:1px;background:#575757;"></div>
<div style="left:48px;top:346px;width:3px;height:1px;background:#575757;"></div>
<div style="left:49px;top:349px;width:2px;height:1px;background:#575757;"></div>
<div style="left:49px;top:352px;width:2px;height:1px;background:#575757;"></div>
<div style="left:49px;top:355px;width:2px;height:1px;background:#575757;"></div>
<div style="left:49px;top:358px;width:2px;height:1px;background:#575757;"></div>
<div class="t" style="left:40px;top:333.7px;width:8px;font-size:8.5px;line-height:6.9px;color:#999999;text-align:center;white-space:normal;word-break:break-all;transform:scaleX(.72)">600</div>
<div style="left:36px;top:361px;width:15px;height:1px;background:#5c5c5c;"></div>
<div style="left:49px;top:364px;width:2px;height:1px;background:#575757;"></div>
<div style="left:49px;top:367px;width:2px;height:1px;background:#575757;"></div>
<div style="left:49px;top:370px;width:2px;height:1px;background:#575757;"></div>
<div style="left:49px;top:373px;width:2px;height:1px;background:#575757;"></div>
<div style="left:48px;top:376px;width:3px;height:1px;background:#575757;"></div>
<div style="left:49px;top:379px;width:2px;height:1px;background:#575757;"></div>
<div style="left:49px;top:382px;width:2px;height:1px;background:#575757;"></div>
<div style="left:49px;top:385px;width:2px;height:1px;background:#575757;"></div>
<div style="left:49px;top:387px;width:2px;height:1px;background:#575757;"></div>
<div class="t" style="left:40px;top:363.1px;width:8px;font-size:8.5px;line-height:6.9px;color:#999999;text-align:center;white-space:normal;word-break:break-all;transform:scaleX(.72)">700</div>
<div style="left:36px;top:390px;width:15px;height:1px;background:#5c5c5c;"></div>
<div style="left:49px;top:393px;width:2px;height:1px;background:#575757;"></div>
<div style="left:49px;top:396px;width:2px;height:1px;background:#575757;"></div>
<div style="left:49px;top:399px;width:2px;height:1px;background:#575757;"></div>
<div style="left:49px;top:402px;width:2px;height:1px;background:#575757;"></div>
<div style="left:48px;top:405px;width:3px;height:1px;background:#575757;"></div>
<div style="left:49px;top:408px;width:2px;height:1px;background:#575757;"></div>
<div style="left:49px;top:411px;width:2px;height:1px;background:#575757;"></div>
<div style="left:49px;top:414px;width:2px;height:1px;background:#575757;"></div>
<div style="left:49px;top:417px;width:2px;height:1px;background:#575757;"></div>
<div class="t" style="left:40px;top:392.4px;width:8px;font-size:8.5px;line-height:6.9px;color:#999999;text-align:center;white-space:normal;word-break:break-all;transform:scaleX(.72)">800</div>
<div style="left:36px;top:420px;width:15px;height:1px;background:#5c5c5c;"></div>
<div style="left:49px;top:423px;width:2px;height:1px;background:#575757;"></div>
<div style="left:49px;top:426px;width:2px;height:1px;background:#575757;"></div>
<div style="left:49px;top:429px;width:2px;height:1px;background:#575757;"></div>
<div style="left:49px;top:431px;width:2px;height:1px;background:#575757;"></div>
<div style="left:48px;top:434px;width:3px;height:1px;background:#575757;"></div>
<div style="left:49px;top:437px;width:2px;height:1px;background:#575757;"></div>
<div style="left:49px;top:440px;width:2px;height:1px;background:#575757;"></div>
<div style="left:49px;top:443px;width:2px;height:1px;background:#575757;"></div>
<div style="left:49px;top:446px;width:2px;height:1px;background:#575757;"></div>
<div class="t" style="left:40px;top:421.8px;width:8px;font-size:8.5px;line-height:6.9px;color:#999999;text-align:center;white-space:normal;word-break:break-all;transform:scaleX(.72)">900</div>
<div style="left:36px;top:449px;width:15px;height:1px;background:#5c5c5c;"></div>
<div style="left:49px;top:452px;width:2px;height:1px;background:#575757;"></div>
<div style="left:49px;top:455px;width:2px;height:1px;background:#575757;"></div>
<div style="left:49px;top:458px;width:2px;height:1px;background:#575757;"></div>
<div style="left:49px;top:461px;width:2px;height:1px;background:#575757;"></div>
<div style="left:48px;top:464px;width:3px;height:1px;background:#575757;"></div>
<div style="left:49px;top:467px;width:2px;height:1px;background:#575757;"></div>
<div style="left:49px;top:470px;width:2px;height:1px;background:#575757;"></div>
<div style="left:49px;top:473px;width:2px;height:1px;background:#575757;"></div>
<div style="left:49px;top:476px;width:2px;height:1px;background:#575757;"></div>
<div class="t" style="left:40px;top:451.1px;width:8px;font-size:8.5px;line-height:6.9px;color:#999999;text-align:center;white-space:normal;word-break:break-all;transform:scaleX(.72)">1000</div>
<div style="left:36px;top:478px;width:15px;height:1px;background:#5c5c5c;"></div>
<div style="left:49px;top:481px;width:2px;height:1px;background:#575757;"></div>
<div style="left:49px;top:484px;width:2px;height:1px;background:#575757;"></div>
<div style="left:49px;top:487px;width:2px;height:1px;background:#575757;"></div>
<div style="left:49px;top:490px;width:2px;height:1px;background:#575757;"></div>
<div style="left:48px;top:493px;width:3px;height:1px;background:#575757;"></div>
<div style="left:49px;top:496px;width:2px;height:1px;background:#575757;"></div>
<div style="left:49px;top:499px;width:2px;height:1px;background:#575757;"></div>
<div style="left:49px;top:502px;width:2px;height:1px;background:#575757;"></div>
<div style="left:49px;top:505px;width:2px;height:1px;background:#575757;"></div>
<div class="t" style="left:40px;top:480.4px;width:8px;font-size:8.5px;line-height:6.9px;color:#999999;text-align:center;white-space:normal;word-break:break-all;transform:scaleX(.72)">1100</div>
<div style="left:36px;top:508px;width:15px;height:1px;background:#5c5c5c;"></div>
<div style="left:49px;top:511px;width:2px;height:1px;background:#575757;"></div>
<div style="left:49px;top:514px;width:2px;height:1px;background:#575757;"></div>
<div style="left:49px;top:517px;width:2px;height:1px;background:#575757;"></div>
<div style="left:49px;top:520px;width:2px;height:1px;background:#575757;"></div>
<div style="left:48px;top:522px;width:3px;height:1px;background:#575757;"></div>
<div style="left:49px;top:525px;width:2px;height:1px;background:#575757;"></div>
<div style="left:49px;top:528px;width:2px;height:1px;background:#575757;"></div>
<div style="left:49px;top:531px;width:2px;height:1px;background:#575757;"></div>
<div style="left:49px;top:534px;width:2px;height:1px;background:#575757;"></div>
<div class="t" style="left:40px;top:509.8px;width:8px;font-size:8.5px;line-height:6.9px;color:#999999;text-align:center;white-space:normal;word-break:break-all;transform:scaleX(.72)">1200</div>
<div style="left:36px;top:537px;width:15px;height:1px;background:#5c5c5c;"></div>
<div style="left:49px;top:540px;width:2px;height:1px;background:#575757;"></div>
<div style="left:49px;top:543px;width:2px;height:1px;background:#575757;"></div>
<div style="left:49px;top:546px;width:2px;height:1px;background:#575757;"></div>
<div style="left:49px;top:549px;width:2px;height:1px;background:#575757;"></div>
<div style="left:48px;top:552px;width:3px;height:1px;background:#575757;"></div>
<div style="left:49px;top:555px;width:2px;height:1px;background:#575757;"></div>
<div style="left:49px;top:558px;width:2px;height:1px;background:#575757;"></div>
<div style="left:49px;top:561px;width:2px;height:1px;background:#575757;"></div>
<div style="left:49px;top:564px;width:2px;height:1px;background:#575757;"></div>
<div class="t" style="left:40px;top:539.1px;width:8px;font-size:8.5px;line-height:6.9px;color:#999999;text-align:center;white-space:normal;word-break:break-all;transform:scaleX(.72)">1300</div>
<div style="left:36px;top:566px;width:15px;height:1px;background:#5c5c5c;"></div>
<div style="left:49px;top:569px;width:2px;height:1px;background:#575757;"></div>
<div style="left:49px;top:572px;width:2px;height:1px;background:#575757;"></div>
<div style="left:49px;top:575px;width:2px;height:1px;background:#575757;"></div>
<div style="left:49px;top:578px;width:2px;height:1px;background:#575757;"></div>
<div style="left:48px;top:581px;width:3px;height:1px;background:#575757;"></div>
<div style="left:49px;top:584px;width:2px;height:1px;background:#575757;"></div>
<div style="left:49px;top:587px;width:2px;height:1px;background:#575757;"></div>
<div class="t" style="left:40px;top:568.5px;width:8px;font-size:8.5px;line-height:6.9px;color:#999999;text-align:center;white-space:normal;word-break:break-all;transform:scaleX(.72)">1400</div>
<svg style="position:absolute;left:944px;top:83px;" width="9" height="5" viewBox="0 0 9 5"><path d="M0.5 4.5 L4.5 0.8 L8.5 4.5" stroke="#9c9c9c" stroke-width="1.1" fill="none"/></svg>
<div style="left:807.5px;top:36.5px;width:33px;height:71.5px;background:#535353;box-shadow:0 0 0 1px #3a3a3a;border-radius:2px;"></div>
<div style="left:807.5px;top:36.5px;width:33px;height:10.5px;background:#444444;border-radius:2px 2px 0 0;"></div>
<svg style="position:absolute;left:815px;top:39px;" width="7" height="6" viewBox="0 0 7 6"><path d="M1 1 L3 3 L1 5 M4 1 L6 3 L4 5" stroke="#d0d0d0" stroke-width="1.1" fill="none"/></svg>
<svg style="position:absolute;left:829.5px;top:38.5px;" width="7" height="7" viewBox="0 0 7 7"><path d="M1 1 L6 6 M6 1 L1 6" stroke="#d8d8d8" stroke-width="1.6"/></svg>
<svg style="position:absolute;left:814px;top:60px;" width="18" height="16" viewBox="0 0 18 16"><g stroke="#dedede" stroke-width="1.2" fill="none"><path d="M1 3 H17 M1 8 H17 M1 13 H17"/></g><g stroke="#dedede" stroke-width="1.2" fill="#535353"><circle cx="6" cy="3" r="2"/><circle cx="12" cy="8" r="2"/><circle cx="7" cy="13" r="2"/></g></svg>
<svg style="position:absolute;left:815px;top:85px;" width="17" height="17" viewBox="0 0 17 17"><circle cx="8.5" cy="8.5" r="7" stroke="#e0e0e0" stroke-width="1.5" fill="none"/><circle cx="8.5" cy="4.8" r="1.1" fill="#e0e0e0"/><rect x="7.6" y="6.8" width="1.8" height="6" fill="#e0e0e0"/></svg>
<div style="left:0px;top:51px;width:35px;height:536px;background:#535353;"></div>
<div style="left:0px;top:51px;width:34px;height:10px;background:#454545;"></div>
<div style="left:34px;top:51px;width:2px;height:536px;background:#3c3c3c;"></div>
<svg style="position:absolute;left:9px;top:79.4px" width="16" height="16" viewBox="0 0 20 20"><g stroke="#dcdcdc" stroke-width="1.6" fill="none"><path d="M10 3 V17 M3 10 H17"/></g><g fill="#dcdcdc"><path d="M10 1.5 L12.8 4.8 H7.2Z M10 18.5 L12.8 15.2 H7.2Z M1.5 10 L4.8 7.2 V12.8Z M18.5 10 L15.2 7.2 V12.8Z"/></g></svg>
<svg style="position:absolute;left:25px;top:92px;" width="3" height="3" viewBox="0 0 3 3"><path d="M3 0 L3 3 L0 3 Z" fill="#bdbdbd"/></svg>
<svg style="position:absolute;left:9px;top:101.5px" width="16" height="16" viewBox="0 0 20 20"><ellipse cx="10" cy="10" rx="7" ry="6" stroke="#dcdcdc" stroke-width="1.4" fill="none" stroke-dasharray="2.6 1.6"/></svg>
<svg style="position:absolute;left:25px;top:114px;" width="3" height="3" viewBox="0 0 3 3"><path d="M3 0 L3 3 L0 3 Z" fill="#bdbdbd"/></svg>
<svg style="position:absolute;left:9px;top:125.8px" width="16" height="16" viewBox="0 0 20 20"><ellipse cx="10.5" cy="8.5" rx="7" ry="5" stroke="#dcdcdc" stroke-width="1.5" fill="none"/><path d="M5 12 C3 14 4 17 6 17.5" stroke="#dcdcdc" stroke-width="1.4" fill="none"/><circle cx="5" cy="13" r="1.6" fill="#dcdcdc"/></svg>
<svg style="position:absolute;left:25px;top:139px;" width="3" height="3" viewBox="0 0 3 3"><path d="M3 0 L3 3 L0 3 Z" fill="#bdbdbd"/></svg>
<svg style="position:absolute;left:9px;top:147.0px" width="16" height="16" viewBox="0 0 20 20"><rect x="3" y="3" width="10" height="10" stroke="#dcdcdc" stroke-width="1" stroke-dasharray="1.5 1" fill="none"/><rect x="5.5" y="5.5" width="5" height="5" fill="#dcdcdc"/><path d="M9 9 L17 13 L13.5 14 L16 17.5 L14.5 18.5 L12 15 L9.5 17.5 Z" fill="#dcdcdc"/></svg>
<svg style="position:absolute;left:25px;top:160px;" width="3" height="3" viewBox="0 0 3 3"><path d="M3 0 L3 3 L0 3 Z" fill="#bdbdbd"/></svg>
<svg style="position:absolute;left:9px;top:168.7px" width="16" height="16" viewBox="0 0 20 20"><path d="M5 2 V15 H18 M2 5 H15 V18" stroke="#dcdcdc" stroke-width="1.7" fill="none"/></svg>
<svg style="position:absolute;left:9px;top:192.7px" width="16" height="16" viewBox="0 0 20 20"><path d="M3.5 17 L3 14.5 L10 7.5 L12.5 10 L5.5 17 Z" stroke="#dcdcdc" stroke-width="1.3" fill="none"/><path d="M9 6.5 L13.5 11 L15 9.5 L13.8 8.3 L16 6 C17.2 4.8 15.2 2.8 14 4 L11.7 6.3 L10.5 5 Z" fill="#dcdcdc"/></svg>
<svg style="position:absolute;left:25px;top:206px;" width="3" height="3" viewBox="0 0 3 3"><path d="M3 0 L3 3 L0 3 Z" fill="#bdbdbd"/></svg>
<svg style="position:absolute;left:9px;top:216.5px" width="16" height="16" viewBox="0 0 20 20"><path d="M17 3 L10 10.5 L9.5 11 L11 12.5 L18 4 Z" fill="#dcdcdc"/><path d="M9 11.5 C6 11 5 13 4.5 15 C4 17 3 17 2 17.5 C6 18.5 10.5 17 10.5 13 Z" fill="#dcdcdc"/></svg>
<svg style="position:absolute;left:9px;top:239.0px" width="16" height="16" viewBox="0 0 20 20"><path d="M3 17 L4 13 L14 3 L17 6 L7 16 Z" stroke="#dcdcdc" stroke-width="1.4" fill="none" stroke-linejoin="round"/><path d="M12.5 4.5 L15.5 7.5" stroke="#dcdcdc" stroke-width="1.2"/></svg>
<svg style="position:absolute;left:9px;top:263.0px" width="16" height="16" viewBox="0 0 20 20"><rect x="1.5" y="7" width="5" height="5" stroke="#dcdcdc" stroke-width="1.2" fill="none"/><path d="M4 6 V3 H8 M6.5 1.5 L8.5 3 L6.5 4.5" stroke="#dcdcdc" stroke-width="1.1" fill="none"/><path d="M18 5 L11 12 L12.5 13.5 L19 6 Z M10.5 12.5 C8 12.5 7.5 14.5 7 16 C6.8 17 6 17.5 5 18 C9 19 12 17 12 14 Z" fill="#dcdcdc"/></svg>
<svg style="position:absolute;left:9px;top:284.4px" width="16" height="16" viewBox="0 0 20 20"><path d="M4.5 8 C3.5 10 2.5 11 2.5 12.5 C2.5 14 6.5 14 6.5 12.5 C6.5 11 5.5 10 4.5 8 Z" fill="#dcdcdc"/><path d="M18 5 L11 12 L12.5 13.5 L19 6 Z M10.5 12.5 C8 12.5 7.5 14.5 7 16 C6.8 17 6 17.5 5 18 C9 19 12 17 12 14 Z" fill="#dcdcdc"/></svg>
<svg style="position:absolute;left:9px;top:308.5px" width="16" height="16" viewBox="0 0 20 20"><circle cx="10" cy="4.5" r="2.5" fill="#dcdcdc"/><path d="M8.5 6 H11.5 L12 10 H17 V13 H3 V10 H8 Z" fill="#dcdcdc"/><rect x="3" y="14.5" width="14" height="2" fill="#dcdcdc"/></svg>
<svg style="position:absolute;left:25px;top:322px;" width="3" height="3" viewBox="0 0 3 3"><path d="M3 0 L3 3 L0 3 Z" fill="#bdbdbd"/></svg>
<svg style="position:absolute;left:9px;top:331.0px" width="16" height="16" viewBox="0 0 20 20"><path d="M5 8 C5 4 9 3 11 4.5" stroke="#dcdcdc" stroke-width="1.2" fill="none"/><path d="M3 6 L5 9 L7 6" stroke="#dcdcdc" stroke-width="1.2" fill="none"/><path d="M18 4 L11 11 L12.5 12.5 L19 5 Z M10.5 11.5 C8 11.5 7.5 13.5 7 15 C6.8 16 6 16.5 5 17 C9 18 12 16 12 13 Z" fill="#dcdcdc"/><path d="M13 13 C14 15 14 16 12.5 18" stroke="#dcdcdc" stroke-dasharray="1 1" fill="none"/></svg>
<svg style="position:absolute;left:25px;top:344px;" width="3" height="3" viewBox="0 0 3 3"><path d="M3 0 L3 3 L0 3 Z" fill="#bdbdbd"/></svg>
<svg style="position:absolute;left:9px;top:353.0px" width="16" height="16" viewBox="0 0 20 20"><path d="M8 9 L14 3.5 L18 7.5 L12 13.5 Z" fill="#dcdcdc"/><path d="M8 9 L12 13.5 L9.5 16 L5.5 12 Z" stroke="#dcdcdc" stroke-width="1.3" fill="none"/><path d="M2 3 L7 8 M7 3 L2 8" stroke="#dcdcdc" stroke-width="1"/><circle cx="2" cy="2.5" r="1.2" stroke="#dcdcdc" fill="none"/><circle cx="7" cy="2.5" r="1.2" stroke="#dcdcdc" fill="none"/></svg>
<svg style="position:absolute;left:25px;top:366px;" width="3" height="3" viewBox="0 0 3 3"><path d="M3 0 L3 3 L0 3 Z" fill="#bdbdbd"/></svg>
<svg style="position:absolute;left:9px;top:376.0px" width="16" height="16" viewBox="0 0 20 20"><path d="M3 9 L9 3 L16 10 L10 16 Z" stroke="#dcdcdc" stroke-width="1.5" fill="none"/><path d="M9 3 L7 1 M8 8 L8 3" stroke="#dcdcdc" stroke-width="1.2"/><path d="M17 11 C18.5 13 19 14 19 15 C19 16.5 16 16.5 16 15 C16 14 16.5 13 17 11 Z" fill="#dcdcdc"/></svg>
<svg style="position:absolute;left:25px;top:389px;" width="3" height="3" viewBox="0 0 3 3"><path d="M3 0 L3 3 L0 3 Z" fill="#bdbdbd"/></svg>
<svg style="position:absolute;left:9px;top:400.0px" width="16" height="16" viewBox="0 0 20 20"><path d="M10 2 C12 6 15 9 15 12.5 C15 15.5 12.8 17.5 10 17.5 C7.2 17.5 5 15.5 5 12.5 C5 9 8 6 10 2 Z" fill="#dcdcdc"/></svg>
<svg style="position:absolute;left:9px;top:421.0px" width="16" height="16" viewBox="0 0 20 20"><path d="M6 17 C4.5 15.5 4 12 6 8.5 C8 5 12 4 16 4 C17 8 16 12 13 14 C11 15.5 8.5 15 7.5 14 L4 18 Z" fill="#dcdcdc"/><path d="M5 16 L12 9" stroke="#535353" stroke-width="1.2"/></svg>
<svg style="position:absolute;left:9px;top:444.5px" width="16" height="16" viewBox="0 0 20 20"><ellipse cx="10" cy="10" rx="7.5" ry="6.5" fill="#dcdcdc"/><g fill="#8a8a8a"><circle cx="7" cy="8" r="0.8"/><circle cx="11" cy="7" r="0.8"/><circle cx="13" cy="11" r="0.8"/><circle cx="8" cy="12" r="0.8"/><circle cx="10" cy="10" r="0.6"/><circle cx="14" cy="8" r="0.6"/><circle cx="5" cy="10.5" r="0.6"/></g></svg>
<svg style="position:absolute;left:9px;top:468.3px" width="16" height="16" viewBox="0 0 20 20"><path d="M3.5 3 H16.5 V7 H15 L14.5 5 H11.3 V15.5 L13 16 V17 H7 V16 L8.7 15.5 V5 H5.5 L5 7 H3.5 Z" fill="#dcdcdc"/></svg>
<svg style="position:absolute;left:25px;top:481px;" width="3" height="3" viewBox="0 0 3 3"><path d="M3 0 L3 3 L0 3 Z" fill="#bdbdbd"/></svg>
<svg style="position:absolute;left:9px;top:492.0px" width="16" height="16" viewBox="0 0 20 20"><path d="M2.5 17.5 L4 10 L10 5 L15 10 L10 16 Z" stroke="#dcdcdc" stroke-width="1.5" fill="none" stroke-linejoin="round"/><path d="M11 3.5 L13 1.5 L18.5 7 L16.5 9 Z" fill="#dcdcdc"/><path d="M2.5 17.5 L8 12" stroke="#dcdcdc" stroke-width="1.1"/><circle cx="9" cy="11" r="1.4" fill="#dcdcdc"/></svg>
<svg style="position:absolute;left:25px;top:505px;" width="3" height="3" viewBox="0 0 3 3"><path d="M3 0 L3 3 L0 3 Z" fill="#bdbdbd"/></svg>
<svg style="position:absolute;left:9px;top:513.5px" width="16" height="16" viewBox="0 0 20 20"><path d="M5 2 L5 17 L8.8 13.3 L11.5 18.5 L13.8 17.3 L11.2 12.3 L16 12 Z" fill="#dcdcdc"/></svg>
<svg style="position:absolute;left:25px;top:526px;" width="3" height="3" viewBox="0 0 3 3"><path d="M3 0 L3 3 L0 3 Z" fill="#bdbdbd"/></svg>
<svg style="position:absolute;left:9px;top:536.0px" width="16" height="16" viewBox="0 0 20 20"><rect x="3" y="4.5" width="14" height="11" stroke="#dcdcdc" stroke-width="1.5" fill="#6b6b6b"/></svg>
<svg style="position:absolute;left:25px;top:549px;" width="3" height="3" viewBox="0 0 3 3"><path d="M3 0 L3 3 L0 3 Z" fill="#bdbdbd"/></svg>
<div style="left:4px;top:557px;width:27px;height:21px;background:#333333;border-radius:1px;box-shadow:0 0 0 1px #4a4a4a;"></div>
<svg style="position:absolute;left:8px;top:558.5px" width="19" height="19" viewBox="0 0 20 20"><g fill="#f2f2f2"><rect x="5.3" y="4" width="2.8" height="10" rx="1.4"/><rect x="8.4" y="2.2" width="2.8" height="11" rx="1.4"/><rect x="11.5" y="3" width="2.8" height="11" rx="1.4"/><rect x="14.6" y="5" width="2.7" height="9" rx="1.35"/><path d="M5.3 10 H17.3 V13 C17.3 16 15.5 18.5 12.5 18.5 H9.5 C7.5 18.5 6.5 17.5 5.5 16 L2.2 11.5 C1.5 10.5 2.6 9.3 3.6 10 L5.3 11.5 Z"/></g><g stroke="#535353" stroke-width=".6"><path d="M8.25 7 V12 M11.35 7 V12 M14.45 8 V12"/></g></svg>
<svg style="position:absolute;left:25px;top:573px;" width="3" height="3" viewBox="0 0 3 3"><path d="M3 0 L3 3 L0 3 Z" fill="#bdbdbd"/></svg>
<svg style="position:absolute;left:9px;top:580.0px" width="16" height="16" viewBox="0 0 20 20"><circle cx="9" cy="9" r="5.5" stroke="#dcdcdc" stroke-width="1.6" fill="none"/></svg>
<svg style="position:absolute;left:5px;top:53px;" width="8" height="7" viewBox="0 0 8 7"><path d="M1 1 L3.5 3.5 L1 6 M4.5 1 L7 3.5 L4.5 6" stroke="#c8c8c8" stroke-width="1.1" fill="none"/></svg>
<div style="left:0px;top:51px;width:2px;height:536px;background:#484848;"></div>
<div style="left:957px;top:51px;width:67px;height:11px;background:#424242;"></div>
<svg style="position:absolute;left:977px;top:53px;" width="8" height="7" viewBox="0 0 8 7"><path d="M3.5 1 L1 3.5 L3.5 6 M7 1 L4.5 3.5 L7 6" stroke="#d0d0d0" stroke-width="1.2" fill="none"/></svg>
<div style="left:957px;top:62px;width:33px;height:35px;background:#535353;"></div>
<div style="left:957px;top:97px;width:33px;height:2px;background:#3c3c3c;"></div>
<div style="left:957px;top:99px;width:33px;height:488px;background:#535353;"></div>
<div style="left:965.0px;top:65px;width:1px;height:2px;background:#6a6a6a;"></div>
<div style="left:967.5px;top:65px;width:1px;height:2px;background:#6a6a6a;"></div>
<div style="left:970.0px;top:65px;width:1px;height:2px;background:#6a6a6a;"></div>
<div style="left:972.5px;top:65px;width:1px;height:2px;background:#6a6a6a;"></div>
<div style="left:975.0px;top:65px;width:1px;height:2px;background:#6a6a6a;"></div>
<div style="left:977.5px;top:65px;width:1px;height:2px;background:#6a6a6a;"></div>
<div style="left:980.0px;top:65px;width:1px;height:2px;background:#6a6a6a;"></div>
<div style="left:965.0px;top:101px;width:1px;height:2px;background:#6a6a6a;"></div>
<div style="left:967.5px;top:101px;width:1px;height:2px;background:#6a6a6a;"></div>
<div style="left:970.0px;top:101px;width:1px;height:2px;background:#6a6a6a;"></div>
<div style="left:972.5px;top:101px;width:1px;height:2px;background:#6a6a6a;"></div>
<div style="left:975.0px;top:101px;width:1px;height:2px;background:#6a6a6a;"></div>
<div style="left:977.5px;top:101px;width:1px;height:2px;background:#6a6a6a;"></div>
<div style="left:980.0px;top:101px;width:1px;height:2px;background:#6a6a6a;"></div>
<div style="left:967px;top:74px;width:5px;height:5px;border:1px solid #e0e0e0;box-sizing:border-box;"></div>
<div style="left:967px;top:80px;width:5px;height:5px;border:1px solid #e0e0e0;box-sizing:border-box;"></div>
<div style="left:967px;top:86px;width:5px;height:4px;background:#e0e0e0;"></div>
<svg style="position:absolute;left:973.5px;top:73.5px;" width="8" height="15" viewBox="0 0 8 15"><path d="M1.2 4.2 L2.6 0.8 L5.6 2.6" stroke="#e0e0e0" stroke-width="1.3" fill="none"/><path d="M2.6 1.2 C6.5 3 7.5 9 3.5 14" stroke="#e0e0e0" stroke-width="1.4" fill="none"/></svg>
<div style="left:964px;top:110.0px;width:2px;height:2px;background:#e0e0e0;"></div>
<div style="left:967px;top:110.0px;width:5px;height:1.5px;background:#e0e0e0;"></div>
<div style="left:964px;top:113.3px;width:2px;height:2px;background:#e0e0e0;"></div>
<div style="left:967px;top:113.3px;width:5px;height:1.5px;background:#e0e0e0;"></div>
<div style="left:964px;top:116.6px;width:2px;height:2px;background:#e0e0e0;"></div>
<div style="left:967px;top:116.6px;width:5px;height:1.5px;background:#e0e0e0;"></div>
<svg style="position:absolute;left:974px;top:110px;" width="9" height="9" viewBox="0 0 9 9"><path d="M8.5 0.5 C6 1.5 3 4 0.5 8.5 C3 8 6 6 8.5 0.5 Z" fill="#e0e0e0"/></svg>
<div style="left:990px;top:51px;width:3px;height:536px;background:#3c3c3c;"></div>
<div style="left:993px;top:62px;width:31px;height:525px;background:#535353;"></div>
<div style="left:957px;top:51px;width:67px;height:11px;background:#424242;"></div>
<svg style="position:absolute;left:977px;top:53px;" width="8" height="7" viewBox="0 0 8 7"><path d="M3.5 1 L1 3.5 L3.5 6 M7 1 L4.5 3.5 L7 6" stroke="#d0d0d0" stroke-width="1.2" fill="none"/></svg>
<div class="t" style="left:1000px;top:68.96px;font-size:9.5px;line-height:9.5px;color:#f0f0f0;font-weight:bold;letter-spacing:0px;">Swatc</div>
<svg style="position:absolute;left:999px;top:98px;" width="11" height="11" viewBox="0 0 11 11"><circle cx="4.3" cy="4.3" r="3.3" stroke="#e8e8e8" stroke-width="1.5" fill="none"/><path d="M6.8 6.8 L10 10" stroke="#e8e8e8" stroke-width="2"/></svg>
<div style="left:1012px;top:95px;width:12px;height:17px;background:#474747;border-radius:1px 0 0 1px;"></div>
<div class="t" style="left:1015px;top:99.38px;font-size:9px;line-height:9px;color:#7a7a7a;font-weight:normal;letter-spacing:0px;">Se</div>
<div style="left:999px;top:122px;width:14px;height:14px;background:#000000;"></div>
<div style="left:1015px;top:122px;width:9px;height:14px;background:#95c7ee;"></div>
<div style="left:993px;top:145px;width:31px;height:23px;background:#474747;"></div>
<svg style="position:absolute;left:999px;top:155.5px;" width="8" height="5" viewBox="0 0 8 5"><path d="M0.5 0.5 L4 4 L7.5 0.5" stroke="#a8a8a8" stroke-width="1" fill="none"/></svg>
<svg style="position:absolute;left:1010.5px;top:152.5px;" width="13" height="11" viewBox="0 0 13 11"><path d="M0.5 0.5 H5 L6.5 2 H13 V10.5 H0.5 Z" fill="#dcdcdc"/><path d="M0.5 3.8 H13" stroke="#474747" stroke-width="1"/><path d="M1.5 1.5 H4.5" stroke="#474747" stroke-width=".8"/></svg>
<div style="left:1011.5px;top:172px;width:12.5px;height:24.5px;background:#ff0000;"></div>
<svg style="position:absolute;left:1001px;top:206px;" width="5" height="8" viewBox="0 0 5 8"><path d="M0.5 0.5 L4 4 L0.5 7.5" stroke="#a8a8a8" stroke-width="1" fill="none"/></svg>
<svg style="position:absolute;left:1010.5px;top:204.5px;" width="13" height="11" viewBox="0 0 13 11"><path d="M0.5 0.5 H5 L6.5 2 H13 V10.5 H0.5 Z" fill="#dcdcdc"/><path d="M0.5 3.8 H13" stroke="#535353" stroke-width="1"/></svg>
<div style="left:993px;top:223.5px;width:31px;height:22px;background:#474747;"></div>
<svg style="position:absolute;left:999px;top:232.5px;" width="8" height="5" viewBox="0 0 8 5"><path d="M0.5 0.5 L4 4 L7.5 0.5" stroke="#a8a8a8" stroke-width="1" fill="none"/></svg>
<svg style="position:absolute;left:1010.5px;top:229.5px;" width="13" height="11" viewBox="0 0 13 11"><path d="M0.5 0.5 H5 L6.5 2 H13 V10.5 H0.5 Z" fill="#dcdcdc"/><path d="M0.5 3.8 H13" stroke="#474747" stroke-width="1"/></svg>
<div style="left:1011px;top:249px;width:13px;height:24px;background:#ffffff;"></div>
<div style="left:1011px;top:275px;width:13px;height:25px;background:#b4b4b4;"></div>
<div style="left:1011px;top:302px;width:13px;height:25px;background:#7d7d7d;"></div>
<div style="left:1011px;top:327px;width:13px;height:2px;background:#111111;"></div>
<div style="left:993px;top:333px;width:31px;height:2px;background:#3c3c3c;"></div>
<div style="left:993px;top:352px;width:31px;height:2px;background:#3c3c3c;"></div>
<div class="t" style="left:1000px;top:362.96px;font-size:9.5px;line-height:9.5px;color:#f0f0f0;font-weight:bold;letter-spacing:0px;">Brush</div>
<div style="left:993px;top:381px;width:31px;height:2px;background:#3c3c3c;"></div>
<div class="t" style="left:1000px;top:389.96px;font-size:9.5px;line-height:9.5px;color:#f0f0f0;font-weight:bold;letter-spacing:0px;">Layers</div>
<div style="left:993px;top:405px;width:31px;height:1px;background:#4a4a4a;"></div>
<div style="left:1000px;top:413px;width:24px;height:22px;background:#4a4a4a;border-radius:2px 0 0 2px;border:1px solid #5e5e5e;border-right:none;box-sizing:border-box;"></div>
<svg style="position:absolute;left:1002px;top:419px;" width="10" height="10" viewBox="0 0 10 10"><circle cx="4" cy="4" r="3" stroke="#c8c8c8" stroke-width="1.3" fill="none"/><path d="M6.2 6.2 L9 9" stroke="#c8c8c8" stroke-width="1.8"/></svg>
<div class="t" style="left:1015px;top:420.38px;font-size:9px;line-height:9px;color:#777777;font-weight:normal;letter-spacing:0px;">Ki</div>
<div style="left:993px;top:438px;width:31px;height:1px;background:#484848;"></div>
<div style="left:1000px;top:441px;width:24px;height:18px;background:#4a4a4a;border:1px solid #5a5a5a;border-right:none;box-sizing:border-box;"></div>
<div class="t" style="left:1003px;top:445.38px;font-size:9px;line-height:9px;color:#777777;font-weight:normal;letter-spacing:0px;">Norm</div>
<div style="left:993px;top:462px;width:31px;height:1px;background:#484848;"></div>
<div class="t" style="left:1000px;top:470.80px;font-size:8.5px;line-height:8.5px;color:#8a8a8a;font-weight:normal;letter-spacing:0px;">Lock:</div>
<div style="left:993px;top:483px;width:31px;height:1px;background:#484848;"></div>
<div style="left:1018px;top:483px;width:1px;height:69px;background:#484848;"></div>
<svg style="position:absolute;left:999px;top:500px;" width="15" height="10" viewBox="0 0 15 10"><path d="M0.8 5 C3.5 0.8 11.5 0.8 14.2 5 C11.5 9.2 3.5 9.2 0.8 5 Z" fill="#e6e6e6"/><circle cx="7.5" cy="5" r="2.3" fill="#535353"/><circle cx="7.5" cy="5" r="1.2" fill="#e6e6e6"/></svg>
<div style="left:1021px;top:489px;width:5px;height:32px;border:2px solid #e0e0e0;border-right:none;box-sizing:border-box;background:#535353;"></div>
<div style="left:1022px;top:506px;width:2px;height:4px;background:#535353;"></div>
<div style="left:993px;top:552px;width:31px;height:1px;background:#444444;"></div>
<div style="left:993px;top:553px;width:31px;height:34px;background:#4f4f4f;"></div>
<svg style="position:absolute;left:999px;top:566.5px;" width="15" height="10" viewBox="0 0 15 10"><path d="M0.8 5 C3.5 0.8 11.5 0.8 14.2 5 C11.5 9.2 3.5 9.2 0.8 5 Z" fill="#e6e6e6"/><circle cx="7.5" cy="5" r="2.3" fill="#4f4f4f"/><circle cx="7.5" cy="5" r="1.2" fill="#e6e6e6"/></svg>
<div style="left:1018px;top:553px;width:1px;height:34px;background:#444444;"></div>
<div style="left:1021px;top:560px;width:3px;height:27px;background:#e8e8e8;"></div>
<div style="left:301px;top:119px;width:691px;height:437px;background:#555555;border-radius:6px 6px 4px 4px;box-shadow:0 0 0 1.5px rgba(60,104,144,.9), 0 10px 24px 1px rgba(0,20,40,.42);"></div>
<div style="left:301px;top:119px;width:691px;height:27px;background:#0063b1;border-radius:6px 6px 0 0;"></div>
<div class="t" style="left:309px;top:128.27px;font-size:11.5px;line-height:11.5px;color:#ffffff;font-weight:normal;letter-spacing:-0.05px;">Layer Style</div>
<svg style="position:absolute;left:973px;top:128px;" width="10" height="10" viewBox="0 0 10 10"><path d="M0.5 0.5 L9.5 9.5 M9.5 0.5 L0.5 9.5" stroke="#cfe6ff" stroke-width="1.1"/></svg>
<div style="left:311px;top:156px;width:203px;height:392px;background:#4c4c4c;"></div>
<div style="left:312px;top:159px;width:199px;height:388px;background:#555555;"></div>
<div style="left:497px;top:159px;width:14px;height:363px;background:#4b4b4b;"></div>
<div style="left:511px;top:159px;width:1px;height:363px;background:#5a5a5a;"></div>
<div style="left:312px;top:159.5px;width:185px;height:21.5px;background:#545454;"></div>
<div style="left:312px;top:181.0px;width:185px;height:1.4px;background:#474747;"></div>
<div class="t" style="left:318px;top:165.38px;font-size:9px;line-height:9px;color:#e0e0e0;font-weight:normal;letter-spacing:-0.15px;">Styles</div>
<div style="left:312px;top:182.0px;width:185px;height:21.5px;background:#545454;"></div>
<div style="left:312px;top:204.0px;width:185px;height:1.4px;background:#474747;"></div>
<div class="t" style="left:318px;top:188.23px;font-size:9px;line-height:9px;color:#e0e0e0;font-weight:normal;letter-spacing:-0.15px;">Blending Options</div>
<div style="left:312px;top:205.0px;width:185px;height:21.5px;background:#545454;"></div>
<div style="left:312px;top:226.5px;width:185px;height:1.4px;background:#474747;"></div>
<div style="left:317.5px;top:211.60000000000002px;width:9px;height:9px;border:1px solid #6e6e6e;border-radius:1.5px;box-sizing:border-box;background:#4e4e4e;"></div>
<div class="t" style="left:330.5px;top:211.08px;font-size:9px;line-height:9px;color:#e0e0e0;font-weight:normal;letter-spacing:-0.15px;">Bevel &amp; Emboss</div>
<div style="left:312px;top:228.0px;width:185px;height:21.5px;background:#545454;"></div>
<div style="left:312px;top:249.5px;width:185px;height:1.4px;background:#474747;"></div>
<div style="left:326.5px;top:234.45000000000002px;width:9px;height:9px;border:1px solid #6e6e6e;border-radius:1.5px;box-sizing:border-box;background:#4e4e4e;"></div>
<div class="t" style="left:339.5px;top:233.93px;font-size:9px;line-height:9px;color:#e0e0e0;font-weight:normal;letter-spacing:-0.15px;">Contour</div>
<div style="left:312px;top:251.0px;width:185px;height:21.5px;background:#545454;"></div>
<div style="left:312px;top:272.5px;width:185px;height:1.4px;background:#474747;"></div>
<div style="left:326.5px;top:257.3px;width:9px;height:9px;border:1px solid #6e6e6e;border-radius:1.5px;box-sizing:border-box;background:#4e4e4e;"></div>
<div class="t" style="left:339.5px;top:256.78px;font-size:9px;line-height:9px;color:#e0e0e0;font-weight:normal;letter-spacing:-0.15px;">Texture</div>
<div style="left:312px;top:273.5px;width:185px;height:21.5px;background:#6a6a6a;"></div>
<div style="left:312px;top:295.0px;width:185px;height:1.4px;background:#474747;"></div>
<div style="left:317.5px;top:280.15px;width:9px;height:9px;background:#e8e8e8;border-radius:1.5px;"></div>
<svg style="position:absolute;left:318.5px;top:281.15px;" width="7" height="7" viewBox="0 0 7 7"><path d="M1 3.6 L2.9 5.5 L6.2 1.6" stroke="#333" stroke-width="1.5" fill="none"/></svg>
<div class="t" style="left:330.5px;top:279.63px;font-size:9px;line-height:9px;color:#e0e0e0;font-weight:normal;letter-spacing:-0.15px;">Stroke</div>
<div style="left:481.5px;top:278.15px;width:12.5px;height:12.5px;border:1.5px solid #e2e2e2;box-sizing:border-box;border-radius:1px;"></div>
<div style="left:484.5px;top:283.45px;width:6.5px;height:1.9px;background:#f0f0f0;"></div>
<div style="left:486.8px;top:281.15px;width:1.9px;height:6.5px;background:#f0f0f0;"></div>
<div style="left:312px;top:296.5px;width:185px;height:21.5px;background:#545454;"></div>
<div style="left:312px;top:318.0px;width:185px;height:1.4px;background:#474747;"></div>
<div style="left:317.5px;top:303.0px;width:9px;height:9px;border:1px solid #6e6e6e;border-radius:1.5px;box-sizing:border-box;background:#4e4e4e;"></div>
<div class="t" style="left:330.5px;top:302.48px;font-size:9px;line-height:9px;color:#e0e0e0;font-weight:normal;letter-spacing:-0.15px;">Inner Shadow</div>
<div style="left:481.5px;top:301.0px;width:12.5px;height:12.5px;border:1.5px solid #e2e2e2;box-sizing:border-box;border-radius:1px;"></div>
<div style="left:484.5px;top:306.3px;width:6.5px;height:1.9px;background:#f0f0f0;"></div>
<div style="left:486.8px;top:304.0px;width:1.9px;height:6.5px;background:#f0f0f0;"></div>
<div style="left:312px;top:319.5px;width:185px;height:21.5px;background:#545454;"></div>
<div style="left:312px;top:341.0px;width:185px;height:1.4px;background:#474747;"></div>
<div style="left:317.5px;top:325.85px;width:9px;height:9px;border:1px solid #6e6e6e;border-radius:1.5px;box-sizing:border-box;background:#4e4e4e;"></div>
<div class="t" style="left:330.5px;top:325.33px;font-size:9px;line-height:9px;color:#e0e0e0;font-weight:normal;letter-spacing:-0.15px;">Inner Glow</div>
<div style="left:312px;top:342.0px;width:185px;height:21.5px;background:#545454;"></div>
<div style="left:312px;top:363.5px;width:185px;height:1.4px;background:#474747;"></div>
<div style="left:317.5px;top:348.70000000000005px;width:9px;height:9px;border:1px solid #6e6e6e;border-radius:1.5px;box-sizing:border-box;background:#4e4e4e;"></div>
<div class="t" style="left:330.5px;top:348.18px;font-size:9px;line-height:9px;color:#e0e0e0;font-weight:normal;letter-spacing:-0.15px;">Satin</div>
<div style="left:312px;top:365.0px;width:185px;height:21.5px;background:#545454;"></div>
<div style="left:312px;top:386.5px;width:185px;height:1.4px;background:#474747;"></div>
<div style="left:317.5px;top:371.55px;width:9px;height:9px;border:1px solid #6e6e6e;border-radius:1.5px;box-sizing:border-box;background:#4e4e4e;"></div>
<div class="t" style="left:330.5px;top:371.03px;font-size:9px;line-height:9px;color:#e0e0e0;font-weight:normal;letter-spacing:-0.15px;">Color Overlay</div>
<div style="left:481.5px;top:369.55px;width:12.5px;height:12.5px;border:1.5px solid #e2e2e2;box-sizing:border-box;border-radius:1px;"></div>
<div style="left:484.5px;top:374.85px;width:6.5px;height:1.9px;background:#f0f0f0;"></div>
<div style="left:486.8px;top:372.55px;width:1.9px;height:6.5px;background:#f0f0f0;"></div>
<div style="left:312px;top:388.0px;width:185px;height:21.5px;background:#545454;"></div>
<div style="left:312px;top:409.5px;width:185px;height:1.4px;background:#474747;"></div>
<div style="left:317.5px;top:394.4px;width:9px;height:9px;border:1px solid #6e6e6e;border-radius:1.5px;box-sizing:border-box;background:#4e4e4e;"></div>
<div class="t" style="left:330.5px;top:393.88px;font-size:9px;line-height:9px;color:#e0e0e0;font-weight:normal;letter-spacing:-0.15px;">Gradient Overlay</div>
<div style="left:481.5px;top:392.4px;width:12.5px;height:12.5px;border:1.5px solid #e2e2e2;box-sizing:border-box;border-radius:1px;"></div>
<div style="left:484.5px;top:397.7px;width:6.5px;height:1.9px;background:#f0f0f0;"></div>
<div style="left:486.8px;top:395.4px;width:1.9px;height:6.5px;background:#f0f0f0;"></div>
<div style="left:312px;top:411.0px;width:185px;height:21.5px;background:#545454;"></div>
<div style="left:312px;top:432.0px;width:185px;height:1.4px;background:#474747;"></div>
<div style="left:317.5px;top:417.25px;width:9px;height:9px;border:1px solid #6e6e6e;border-radius:1.5px;box-sizing:border-box;background:#4e4e4e;"></div>
<div class="t" style="left:330.5px;top:416.73px;font-size:9px;line-height:9px;color:#e0e0e0;font-weight:normal;letter-spacing:-0.15px;">Pattern Overlay</div>
<div style="left:312px;top:433.5px;width:185px;height:21.5px;background:#545454;"></div>
<div style="left:312px;top:455.0px;width:185px;height:1.4px;background:#474747;"></div>
<div style="left:317.5px;top:440.1px;width:9px;height:9px;border:1px solid #6e6e6e;border-radius:1.5px;box-sizing:border-box;background:#4e4e4e;"></div>
<div class="t" style="left:330.5px;top:439.58px;font-size:9px;line-height:9px;color:#e0e0e0;font-weight:normal;letter-spacing:-0.15px;">Outer Glow</div>
<div style="left:312px;top:456.5px;width:185px;height:21.5px;background:#545454;"></div>
<div style="left:312px;top:478.0px;width:185px;height:1.4px;background:#474747;"></div>
<div style="left:317.5px;top:462.95000000000005px;width:9px;height:9px;border:1px solid #6e6e6e;border-radius:1.5px;box-sizing:border-box;background:#4e4e4e;"></div>
<div class="t" style="left:330.5px;top:462.43px;font-size:9px;line-height:9px;color:#e0e0e0;font-weight:normal;letter-spacing:-0.15px;">Drop Shadow</div>
<div style="left:481.5px;top:460.95000000000005px;width:12.5px;height:12.5px;border:1.5px solid #e2e2e2;box-sizing:border-box;border-radius:1px;"></div>
<div style="left:484.5px;top:466.25000000000006px;width:6.5px;height:1.9px;background:#f0f0f0;"></div>
<div style="left:486.8px;top:463.95000000000005px;width:1.9px;height:6.5px;background:#f0f0f0;"></div>
<div class="t" style="left:320px;top:529px;font-size:11.5px;line-height:12px;font-style:italic;color:#c8c8c8;letter-spacing:-0.5px">fx</div>
<svg style="position:absolute;left:328px;top:540px;" width="4" height="3" viewBox="0 0 4 3"><path d="M0 0 H4 L2 2.5 Z" fill="#c8c8c8"/></svg>
<svg style="position:absolute;left:343px;top:530px;" width="11" height="10" viewBox="0 0 11 10"><path d="M5.5 0.5 L10.5 5.5 H7.5 V9.5 H3.5 V5.5 H0.5 Z" fill="#7c7c7c"/></svg>
<svg style="position:absolute;left:366px;top:530px;" width="11" height="10" viewBox="0 0 11 10"><path d="M5.5 9.5 L10.5 4.5 H7.5 V0.5 H3.5 V4.5 H0.5 Z" fill="#7c7c7c"/></svg>
<svg style="position:absolute;left:493px;top:530px;" width="12" height="13" viewBox="0 0 12 13"><path d="M1 2.5 H11 M4.5 2.5 V1 H7.5 V2.5" stroke="#c8c8c8" stroke-width="1.1" fill="none"/><path d="M2.2 3.5 L2.8 12 H9.2 L9.8 3.5" stroke="#c8c8c8" stroke-width="1.1" fill="none"/><path d="M4.6 5 V10.5 M6 5 V10.5 M7.4 5 V10.5" stroke="#c8c8c8" stroke-width=".8"/></svg>
<div style="left:525px;top:156px;width:1px;height:392px;background:#515151;"></div>
<div style="left:527.5px;top:160px;width:13.5px;height:1px;background:#474747;"></div>
<div style="left:575px;top:160px;width:280.5px;height:1px;background:#474747;"></div>
<div style="left:527.5px;top:160px;width:1px;height:386px;background:#474747;"></div>
<div style="left:854.5px;top:160px;width:1px;height:386px;background:#474747;"></div>
<div style="left:527.5px;top:545px;width:328px;height:1px;background:#474747;"></div>
<div class="t" style="left:545px;top:156.58px;font-size:9px;line-height:9px;color:#e0e0e0;font-weight:normal;letter-spacing:-0.15px;">Stroke</div>
<div style="left:536.5px;top:177px;width:12.5px;height:1px;background:#474747;"></div>
<div style="left:596px;top:177px;width:250.5px;height:1px;background:#474747;"></div>
<div style="left:536.5px;top:177px;width:1px;height:110px;background:#474747;"></div>
<div style="left:845.5px;top:177px;width:1px;height:110px;background:#474747;"></div>
<div style="left:536.5px;top:286px;width:310px;height:1px;background:#474747;"></div>
<div class="t" style="left:554px;top:173.63px;font-size:9.3px;line-height:9.3px;color:#e0e0e0;font-weight:normal;letter-spacing:-0.1px;">Structure</div>
<div class="t" style="right:423.5px;top:195.68px;font-size:9px;line-height:9px;color:#cfcfcf;font-weight:normal;letter-spacing:-0.15px;">Size:</div>
<div style="left:612px;top:195px;width:84px;height:3px;background:#787878;border-radius:1px;"></div>
<svg style="position:absolute;left:616.5px;top:197px;" width="10" height="9" viewBox="0 0 10 9"><path d="M0.6 8.6 V5.6 Q0.6 4.6 1.5 3.7 L4 1.2 Q5 0.3 6 1.2 L8.5 3.7 Q9.4 4.6 9.4 5.6 V8.6 Z" fill="#f2f2f2"/></svg>
<div style="left:705px;top:192.5px;width:35px;height:14px;background:#464646;box-shadow:inset 0 0 0 1px #4d4d4d;"></div>
<div class="t" style="left:709px;top:195.68px;font-size:9px;line-height:9px;color:#e6e6e6;font-weight:normal;letter-spacing:0px;">15</div>
<div class="t" style="left:744px;top:195.68px;font-size:9px;line-height:9px;color:#cfcfcf;font-weight:normal;letter-spacing:0px;">px</div>
<div class="t" style="right:423.5px;top:215.58px;font-size:9px;line-height:9px;color:#cfcfcf;font-weight:normal;letter-spacing:-0.15px;">Position:</div>
<div style="left:608px;top:211.7px;width:52.5px;height:16.5px;background:#474747;"></div>
<div class="t" style="left:614.5px;top:215.58px;font-size:9px;line-height:9px;color:#e6e6e6;font-weight:normal;letter-spacing:-0.1px;">Outside</div>
<svg style="position:absolute;left:651px;top:218px;" width="7" height="4" viewBox="0 0 7 4"><path d="M0.5 0.5 L3.5 3.5 L6.5 0.5" stroke="#cfcfcf" stroke-width="1" fill="none"/></svg>
<div class="t" style="right:423.5px;top:235.38px;font-size:9px;line-height:9px;color:#cfcfcf;font-weight:normal;letter-spacing:-0.2px;">Blend Mode:</div>
<div style="left:608px;top:231.6px;width:101px;height:16.5px;background:#474747;"></div>
<div class="t" style="left:614.5px;top:235.38px;font-size:9px;line-height:9px;color:#e6e6e6;font-weight:normal;letter-spacing:-0.1px;">Normal</div>
<svg style="position:absolute;left:700px;top:238px;" width="7" height="4" viewBox="0 0 7 4"><path d="M0.5 0.5 L3.5 3.5 L6.5 0.5" stroke="#cfcfcf" stroke-width="1" fill="none"/></svg>
<div class="t" style="right:423.5px;top:254.38px;font-size:9px;line-height:9px;color:#cfcfcf;font-weight:normal;letter-spacing:-0.15px;">Opacity:</div>
<div style="left:612px;top:253.5px;width:84px;height:3px;background:#787878;border-radius:1px;"></div>
<svg style="position:absolute;left:690.5px;top:255.5px;" width="10" height="9" viewBox="0 0 10 9"><path d="M0.6 8.6 V5.6 Q0.6 4.6 1.5 3.7 L4 1.2 Q5 0.3 6 1.2 L8.5 3.7 Q9.4 4.6 9.4 5.6 V8.6 Z" fill="#f2f2f2"/></svg>
<div style="left:705px;top:251px;width:35px;height:14px;background:#464646;box-shadow:inset 0 0 0 1px #4d4d4d;"></div>
<div class="t" style="left:709px;top:254.38px;font-size:9px;line-height:9px;color:#e6e6e6;font-weight:normal;letter-spacing:0px;">100</div>
<div class="t" style="left:744px;top:254.38px;font-size:9px;line-height:9px;color:#cfcfcf;font-weight:normal;letter-spacing:0px;">%</div>
<div style="left:610px;top:270.5px;width:8.5px;height:8.5px;border:1px solid #6e6e6e;border-radius:1.5px;box-sizing:border-box;background:#4e4e4e;"></div>
<div class="t" style="left:623.5px;top:270.68px;font-size:9px;line-height:9px;color:#dcdcdc;font-weight:normal;letter-spacing:-0.2px;">Overprint</div>
<div style="left:536.5px;top:299px;width:11.5px;height:1px;background:#474747;"></div>
<div style="left:660px;top:299px;width:185.5px;height:1px;background:#474747;"></div>
<div style="left:536.5px;top:299px;width:1px;height:150px;background:#474747;"></div>
<div style="left:844.5px;top:299px;width:1px;height:150px;background:#474747;"></div>
<div style="left:536.5px;top:448px;width:309px;height:1px;background:#474747;"></div>
<div class="t" style="right:433px;top:296.58px;font-size:9px;line-height:9px;color:#e0e0e0;font-weight:normal;letter-spacing:-0.2px;">Fill Type:</div>
<div style="left:596.5px;top:292.5px;width:58px;height:19px;background:#474747;box-shadow:inset 0 0 0 1.5px #3b6496;border-radius:1.5px;"></div>
<div class="t" style="left:603.5px;top:297.13px;font-size:9.3px;line-height:9.3px;color:#eaeaea;font-weight:normal;letter-spacing:-0.1px;">Color</div>
<svg style="position:absolute;left:644.5px;top:300px;" width="7" height="4" viewBox="0 0 7 4"><path d="M0.5 0.5 L3.5 3.5 L6.5 0.5" stroke="#cfcfcf" stroke-width="1" fill="none"/></svg>
<div class="t" style="right:454.5px;top:323.88px;font-size:9px;line-height:9px;color:#cfcfcf;font-weight:normal;letter-spacing:-0.2px;">Color:</div>
<div style="left:574px;top:317px;width:30.5px;height:20px;background:#000000;"></div>
<div style="left:608px;top:456px;width:70.5px;height:17px;background:#4a4a4a;"></div>
<div class="t" style="left:343.29999999999995px;width:600px;text-align:center;top:460.64px;font-size:8.7px;line-height:8.7px;color:#e0e0e0;font-weight:normal;letter-spacing:-0.2px;">Make Default</div>
<div style="left:689.5px;top:456px;width:83.5px;height:17px;background:#4a4a4a;"></div>
<div class="t" style="left:431.20000000000005px;width:600px;text-align:center;top:460.64px;font-size:8.7px;line-height:8.7px;color:#e0e0e0;font-weight:normal;letter-spacing:-0.2px;">Reset to Default</div>
<div style="left:868.5px;top:158.5px;width:114px;height:22px;border:2px solid #d2d2d2;border-radius:11px;box-sizing:border-box;"></div>
<div class="t" style="left:625.5px;width:600px;text-align:center;top:165.19px;font-size:11px;line-height:11px;color:#e8e8e8;font-weight:normal;letter-spacing:0px;">OK</div>
<div style="left:868.5px;top:189px;width:114px;height:22px;border:1px solid #8c8c8c;border-radius:11px;box-sizing:border-box;"></div>
<div class="t" style="left:625.5px;width:600px;text-align:center;top:195.19px;font-size:11px;line-height:11px;color:#e0e0e0;font-weight:normal;letter-spacing:-0.1px;">Cancel</div>
<div style="left:868.5px;top:220px;width:114px;height:22px;border:1px solid #8c8c8c;border-radius:11px;box-sizing:border-box;"></div>
<div class="t" style="left:625.5px;width:600px;text-align:center;top:226.19px;font-size:11px;line-height:11px;color:#e0e0e0;font-weight:normal;letter-spacing:-0.1px;">New Style...</div>
<div style="left:891px;top:252px;width:11px;height:11px;background:#dadada;border-radius:2px;"></div>
<svg style="position:absolute;left:892.5px;top:253.5px;" width="8" height="8" viewBox="0 0 8 8"><path d="M1 4.2 L3.2 6.4 L7 1.8" stroke="#2b2b2b" stroke-width="1.6" fill="none"/></svg>
<div class="t" style="left:907.5px;top:251.49px;font-size:11px;line-height:11px;color:#e0e0e0;font-weight:normal;letter-spacing:-0.1px;">Preview</div>
<div style="left:869.5px;top:273px;width:112px;height:113.5px;background:#2e2e2e;"></div>
<div style="left:894px;top:298px;width:63.5px;height:63.5px;border:3.5px solid #000;border-radius:4px;background:#5a5a5a;box-sizing:border-box;"></div>
</body></html>
